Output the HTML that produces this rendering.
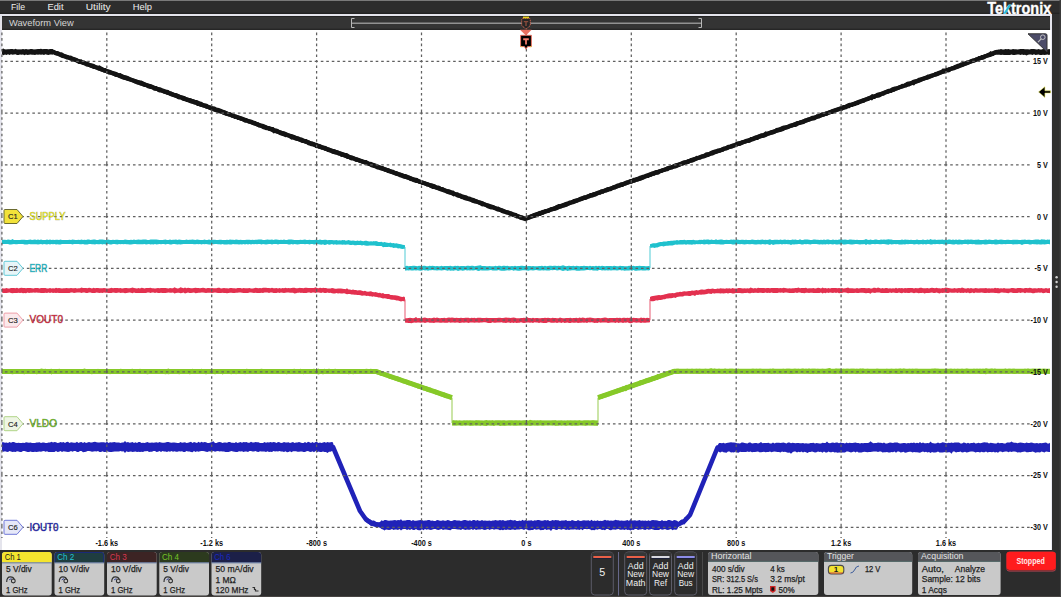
<!DOCTYPE html>
<html><head><meta charset="utf-8"><style>
html,body{margin:0;padding:0;background:#2e2e2e;width:1061px;height:597px;overflow:hidden}
svg{display:block}
</style></head><body>
<svg width="1061" height="597" viewBox="0 0 1061 597" font-family='"Liberation Sans", sans-serif'><rect x="0" y="0" width="1061" height="597" fill="#2d2d2d"/><rect x="0" y="0" width="1061" height="14" fill="#2d2d2d"/><rect x="0" y="0" width="1061" height="1" fill="#7a7a7a"/><rect x="0" y="12.6" width="1061" height="1.4" fill="#232323"/><text x="11" y="9.8" font-size="9.2" fill="#eeeeee" textLength="14" lengthAdjust="spacingAndGlyphs" >File</text><text x="47.5" y="9.8" font-size="9.2" fill="#eeeeee" textLength="16" lengthAdjust="spacingAndGlyphs" >Edit</text><text x="85.7" y="9.8" font-size="9.2" fill="#eeeeee" textLength="25" lengthAdjust="spacingAndGlyphs" >Utility</text><text x="132.7" y="9.8" font-size="9.2" fill="#eeeeee" textLength="19.3" lengthAdjust="spacingAndGlyphs" >Help</text><text x="987.2" y="13.7" font-size="16" fill="#ffffff" font-weight="bold" textLength="64" lengthAdjust="spacingAndGlyphs" stroke="#ffffff" stroke-width="0.35">Tektronix</text><polygon points="1003.3,13.8 1005.8,13.8 1011.4,4.6 1008.9,4.6" fill="#28bcd8"/><rect x="0" y="14" width="1052" height="536" fill="#e4e4ec"/><rect x="2" y="16" width="1048" height="14" fill="#343434"/><rect x="2" y="16" width="1048" height="1" fill="#242424"/><rect x="2" y="28.6" width="1048" height="1.4" fill="#262626"/><rect x="2" y="30" width="1050" height="520" fill="#ffffff"/><text x="9" y="26" font-size="9.2" fill="#d4d4d4" textLength="64.7" lengthAdjust="spacingAndGlyphs" >Waveform View</text><path d="M354.5,18.5 H351.5 V27.5 H354.5" fill="none" stroke="#b8b8b8" stroke-width="1"/><path d="M698.5,18.5 H701.5 V27.5 H698.5" fill="none" stroke="#b8b8b8" stroke-width="1"/><rect x="352" y="22.6" width="349" height="1.2" fill="#a8a8a8"/><rect x="1052" y="14" width="9" height="536" fill="#2f2f2f"/><rect x="1051" y="30" width="1" height="520" fill="#ececf4"/><rect x="1059.5" y="0" width="1.5" height="597" fill="#3a3a3a"/><circle cx="1056.6" cy="277.2" r="1.2" fill="#d0d0d0"/><circle cx="1056.6" cy="282" r="1.2" fill="#d0d0d0"/><circle cx="1056.6" cy="286.8" r="1.2" fill="#d0d0d0"/><path d="M2.0,240.0 L3.5,239.8 L5.0,239.8 L6.5,240.1 L8.0,239.6 L9.5,239.7 L11.0,239.9 L12.5,239.1 L14.0,240.1 L15.5,240.0 L17.0,239.9 L18.5,240.1 L20.0,239.9 L21.5,239.8 L23.0,239.7 L24.5,239.8 L26.0,239.9 L27.5,239.9 L29.0,239.8 L30.5,239.6 L32.0,239.9 L33.5,239.7 L35.0,239.5 L36.5,240.1 L38.0,239.5 L39.5,239.9 L41.0,239.6 L42.5,240.1 L44.0,240.0 L45.5,240.1 L47.0,239.5 L48.5,240.0 L50.0,239.5 L51.5,240.0 L53.0,239.8 L54.5,240.1 L56.0,239.8 L57.5,239.8 L59.0,240.1 L60.5,239.5 L62.0,239.9 L63.5,240.1 L65.0,240.0 L66.5,240.1 L68.0,239.9 L69.5,239.7 L71.0,239.9 L72.5,239.6 L74.0,239.8 L75.5,239.9 L77.0,240.0 L78.5,239.8 L80.0,240.1 L81.5,239.5 L83.0,239.9 L84.5,239.8 L86.0,240.0 L87.5,239.6 L89.0,239.6 L90.5,239.9 L92.0,239.8 L93.5,239.5 L95.0,239.5 L96.5,240.0 L98.0,240.0 L99.5,239.6 L101.0,239.6 L102.5,239.5 L104.0,239.8 L105.5,239.9 L107.0,239.9 L108.5,239.6 L110.0,240.0 L111.5,240.0 L113.0,239.7 L114.5,240.1 L116.0,239.7 L117.5,239.8 L119.0,240.0 L120.5,240.0 L122.0,239.9 L123.5,239.9 L125.0,239.5 L126.5,239.8 L128.0,240.1 L129.5,240.1 L131.0,239.8 L132.5,239.9 L134.0,239.6 L135.5,240.0 L137.0,239.8 L138.5,239.5 L140.0,239.8 L141.5,239.8 L143.0,239.5 L144.5,239.5 L146.0,239.5 L147.5,240.1 L149.0,240.0 L150.5,239.6 L152.0,239.6 L153.5,239.5 L155.0,239.5 L156.5,239.5 L158.0,239.8 L159.5,240.0 L161.0,240.1 L162.5,240.1 L164.0,239.8 L165.5,239.6 L167.0,240.0 L168.5,240.0 L170.0,239.5 L171.5,240.0 L173.0,239.7 L174.5,239.7 L176.0,239.5 L177.5,240.1 L179.0,239.5 L180.5,239.8 L182.0,240.1 L183.5,240.1 L185.0,240.0 L186.5,239.6 L188.0,240.0 L189.5,239.8 L191.0,239.8 L192.5,239.5 L194.0,239.8 L195.5,239.9 L197.0,239.5 L198.5,239.7 L200.0,239.9 L201.5,240.1 L203.0,240.0 L204.5,239.5 L206.0,240.0 L207.5,240.0 L209.0,239.5 L210.5,240.0 L212.0,239.9 L213.5,239.8 L215.0,239.8 L216.5,240.1 L218.0,240.1 L219.5,239.7 L221.0,239.7 L222.5,239.9 L224.0,240.0 L225.5,240.1 L227.0,239.7 L228.5,240.1 L230.0,239.6 L231.5,239.7 L233.0,239.7 L234.5,240.0 L236.0,239.6 L237.5,239.7 L239.0,240.1 L240.5,239.8 L242.0,240.1 L243.5,240.1 L245.0,240.0 L246.5,239.8 L248.0,239.7 L249.5,239.7 L251.0,240.0 L252.5,239.8 L254.0,240.0 L255.5,239.7 L257.0,239.8 L258.5,239.5 L260.0,239.5 L261.5,239.6 L263.0,240.0 L264.5,240.0 L266.0,239.8 L267.5,239.6 L269.0,239.7 L270.5,239.8 L272.0,239.5 L273.5,240.1 L275.0,239.6 L276.5,239.6 L278.0,239.7 L279.5,239.9 L281.0,239.7 L282.5,240.0 L284.0,239.6 L285.5,240.0 L287.0,240.0 L288.5,239.5 L290.0,239.5 L291.5,239.6 L293.0,239.8 L294.5,239.9 L296.0,240.1 L297.5,239.9 L299.0,240.0 L300.5,239.8 L302.0,240.0 L303.5,239.8 L305.0,239.5 L306.5,240.0 L308.0,240.1 L309.5,239.8 L311.0,239.9 L312.5,239.9 L314.0,240.0 L315.5,239.8 L317.0,240.0 L318.5,239.9 L320.0,239.6 L321.5,240.1 L323.0,239.9 L324.5,239.7 L326.0,239.7 L327.5,240.2 L329.0,239.9 L330.5,239.9 L332.0,240.0 L333.5,240.3 L335.0,240.2 L336.5,240.0 L338.0,240.5 L339.5,240.3 L341.0,240.6 L342.5,239.9 L344.0,240.3 L345.0,240.0 L345.5,240.7 L347.0,240.4 L348.5,240.1 L350.0,240.4 L351.5,240.7 L353.0,240.6 L354.5,240.7 L356.0,240.9 L357.5,240.4 L359.0,241.0 L360.5,240.5 L362.0,241.1 L363.5,241.2 L365.0,240.7 L366.5,240.7 L368.0,241.3 L369.5,241.4 L371.0,241.3 L372.5,241.6 L374.0,240.9 L375.0,241.5 L375.5,241.1 L377.0,241.3 L378.5,241.9 L380.0,242.1 L381.5,241.8 L383.0,242.4 L384.5,242.1 L386.0,242.6 L387.5,242.7 L389.0,242.9 L390.5,242.6 L392.0,243.3 L393.5,242.9 L395.0,243.6 L396.5,243.3 L398.0,243.7 L399.5,244.0 L401.0,244.3 L402.5,244.7 L404.0,245.0 L405.0,245.2 L405.0,266.3 L405.5,266.1 L407.0,265.7 L408.5,266.3 L410.0,266.0 L411.5,265.9 L413.0,265.8 L414.5,265.8 L416.0,266.1 L417.5,266.2 L419.0,265.7 L420.5,266.1 L422.0,266.2 L423.5,265.7 L425.0,265.8 L426.5,266.3 L428.0,266.2 L429.5,265.7 L431.0,266.0 L432.5,265.7 L434.0,265.9 L435.5,266.3 L437.0,265.9 L438.5,266.3 L440.0,266.2 L441.5,265.8 L443.0,266.3 L444.5,265.9 L446.0,265.9 L447.5,266.1 L449.0,266.0 L450.5,265.7 L452.0,266.2 L453.5,266.3 L455.0,265.8 L456.5,266.0 L458.0,265.7 L459.5,266.3 L461.0,266.0 L462.5,266.0 L464.0,266.0 L465.5,266.2 L467.0,265.7 L468.5,265.7 L470.0,265.9 L471.5,265.8 L473.0,265.8 L474.5,266.2 L476.0,266.1 L477.5,265.8 L479.0,265.6 L480.5,265.3 L482.0,266.0 L483.5,266.1 L485.0,265.9 L486.5,266.3 L488.0,266.2 L489.5,266.0 L491.0,266.3 L492.5,266.3 L494.0,266.3 L495.5,265.8 L497.0,266.3 L498.5,265.7 L500.0,265.7 L501.5,266.2 L503.0,265.7 L504.5,265.8 L506.0,266.1 L507.5,265.7 L509.0,266.2 L510.5,266.2 L512.0,266.1 L513.5,266.2 L515.0,265.7 L516.5,266.3 L518.0,266.1 L519.5,265.9 L521.0,265.7 L522.5,265.8 L524.0,265.9 L525.5,266.0 L527.0,266.3 L528.5,265.9 L530.0,265.9 L531.5,266.3 L533.0,266.0 L534.5,266.3 L536.0,266.3 L537.5,266.3 L539.0,265.9 L540.5,265.9 L542.0,265.7 L543.5,266.3 L545.0,265.8 L546.5,266.3 L548.0,266.1 L549.5,265.7 L551.0,265.7 L552.5,266.1 L554.0,265.8 L555.5,265.7 L557.0,265.9 L558.5,265.8 L560.0,266.1 L561.5,265.8 L563.0,265.3 L564.5,265.8 L566.0,266.3 L567.5,265.9 L569.0,265.8 L570.5,266.0 L572.0,266.0 L573.5,265.7 L575.0,266.3 L576.5,265.8 L578.0,266.1 L579.5,266.2 L581.0,265.9 L582.5,266.0 L584.0,265.7 L585.5,266.0 L587.0,265.9 L588.5,266.2 L590.0,265.7 L591.5,266.3 L593.0,265.9 L594.5,266.3 L596.0,265.8 L597.5,266.3 L599.0,265.7 L600.5,266.3 L602.0,265.8 L603.5,265.9 L605.0,266.3 L606.5,266.1 L608.0,266.0 L609.5,266.1 L611.0,266.0 L612.5,266.3 L614.0,265.8 L615.5,266.0 L617.0,266.3 L618.5,266.3 L620.0,265.7 L621.5,266.0 L623.0,266.0 L624.5,266.2 L626.0,266.2 L627.5,266.3 L629.0,265.8 L630.5,265.9 L632.0,266.1 L633.5,265.7 L635.0,266.2 L636.5,266.1 L638.0,266.0 L639.5,265.8 L641.0,266.1 L642.5,265.9 L644.0,266.0 L645.5,266.3 L647.0,266.2 L648.5,265.9 L650.0,266.3 L650.0,244.2 L651.5,243.8 L653.0,243.3 L654.5,243.3 L656.0,243.2 L657.5,242.8 L659.0,242.3 L660.5,242.1 L662.0,242.1 L663.5,241.6 L665.0,241.6 L666.5,241.4 L668.0,241.0 L669.5,241.0 L671.0,240.8 L672.5,240.7 L674.0,240.5 L675.5,240.4 L677.0,240.1 L678.5,240.4 L680.0,240.1 L681.5,239.9 L683.0,240.0 L684.5,239.8 L686.0,240.3 L687.5,240.1 L689.0,240.0 L690.5,239.9 L692.0,240.0 L693.5,239.8 L695.0,240.2 L696.5,240.2 L698.0,240.2 L699.5,239.7 L700.0,240.0 L701.0,239.8 L702.5,239.9 L704.0,239.6 L705.5,239.8 L707.0,239.5 L708.5,239.6 L710.0,239.9 L711.5,239.6 L713.0,240.0 L714.5,239.9 L716.0,239.2 L717.5,239.9 L719.0,239.7 L720.5,239.5 L722.0,239.6 L723.5,240.1 L725.0,240.1 L726.5,239.7 L728.0,240.1 L729.5,239.9 L731.0,239.6 L732.5,239.7 L734.0,239.5 L735.5,240.0 L737.0,239.6 L738.5,239.8 L740.0,240.1 L741.5,239.8 L743.0,239.8 L744.5,240.1 L746.0,239.8 L747.5,239.9 L749.0,240.1 L750.5,240.1 L752.0,239.5 L753.5,239.8 L755.0,240.1 L756.5,239.9 L758.0,239.8 L759.5,240.0 L761.0,239.8 L762.5,239.6 L764.0,240.0 L765.5,239.7 L767.0,239.9 L768.5,239.7 L770.0,239.2 L771.5,240.1 L773.0,239.9 L774.5,239.7 L776.0,239.7 L777.5,239.7 L779.0,240.0 L780.5,239.6 L782.0,240.1 L783.5,239.7 L785.0,239.6 L786.5,239.9 L788.0,239.8 L789.5,240.1 L791.0,240.0 L792.5,239.5 L794.0,239.7 L795.5,239.5 L797.0,240.1 L798.5,240.0 L800.0,239.3 L801.5,240.1 L803.0,240.1 L804.5,239.6 L806.0,239.6 L807.5,239.6 L809.0,239.7 L810.5,240.0 L812.0,240.1 L813.5,239.6 L815.0,239.6 L816.5,239.8 L818.0,239.7 L819.5,240.0 L821.0,239.7 L822.5,239.9 L824.0,239.6 L825.5,240.1 L827.0,239.6 L828.5,239.5 L830.0,239.9 L831.5,239.9 L833.0,239.5 L834.5,240.1 L836.0,239.7 L837.5,240.1 L839.0,239.5 L840.5,239.6 L842.0,239.5 L843.5,239.8 L845.0,239.6 L846.5,239.7 L848.0,240.0 L849.5,239.6 L851.0,239.6 L852.5,239.7 L854.0,239.8 L855.5,240.0 L857.0,239.7 L858.5,239.9 L860.0,240.1 L861.5,240.1 L863.0,240.0 L864.5,239.8 L866.0,238.9 L867.5,239.8 L869.0,239.9 L870.5,239.6 L872.0,240.1 L873.5,240.1 L875.0,239.5 L876.5,239.5 L878.0,239.9 L879.5,240.0 L881.0,239.5 L882.5,239.8 L884.0,239.5 L885.5,239.8 L887.0,239.5 L888.5,239.2 L890.0,239.5 L891.5,239.6 L893.0,239.9 L894.5,240.1 L896.0,240.1 L897.5,240.0 L899.0,240.1 L900.5,240.1 L902.0,239.5 L903.5,240.1 L905.0,239.5 L906.5,239.8 L908.0,239.8 L909.5,240.0 L911.0,239.8 L912.5,240.0 L914.0,240.0 L915.5,240.0 L917.0,239.5 L918.5,240.1 L920.0,240.0 L921.5,240.0 L923.0,239.5 L924.5,240.1 L926.0,240.1 L927.5,239.5 L929.0,239.9 L930.5,239.1 L932.0,239.8 L933.5,239.8 L935.0,239.6 L936.5,240.1 L938.0,239.8 L939.5,239.7 L941.0,239.7 L942.5,239.6 L944.0,240.1 L945.5,239.6 L947.0,240.1 L948.5,239.5 L950.0,239.6 L951.5,239.9 L953.0,239.5 L954.5,240.1 L956.0,239.5 L957.5,239.9 L959.0,239.5 L960.5,239.8 L962.0,240.1 L963.5,240.0 L965.0,239.6 L966.5,239.7 L968.0,239.4 L969.5,239.7 L971.0,239.6 L972.5,239.8 L974.0,240.1 L975.5,239.7 L977.0,239.7 L978.5,239.6 L980.0,239.9 L981.5,239.9 L983.0,239.9 L984.5,239.8 L986.0,239.5 L987.5,240.1 L989.0,239.5 L990.5,239.7 L992.0,240.1 L993.5,240.1 L995.0,239.6 L996.5,239.6 L998.0,240.1 L999.5,239.7 L1001.0,239.5 L1002.5,239.8 L1004.0,239.9 L1005.5,240.1 L1007.0,239.8 L1008.5,239.8 L1010.0,240.1 L1011.5,239.9 L1013.0,239.8 L1014.5,239.8 L1016.0,239.7 L1017.5,239.7 L1019.0,240.0 L1020.5,239.9 L1022.0,239.7 L1023.5,239.8 L1025.0,239.5 L1026.5,240.0 L1028.0,239.8 L1029.5,239.8 L1031.0,240.0 L1032.5,240.0 L1034.0,239.7 L1035.5,239.6 L1037.0,239.6 L1038.5,239.6 L1040.0,240.1 L1041.5,239.2 L1043.0,239.5 L1044.5,239.6 L1046.0,239.9 L1047.5,239.6 L1049.0,239.8 L1050.0,239.6 L1050.0,244.4 L1049.0,244.1 L1047.5,244.1 L1046.0,244.2 L1044.5,244.5 L1043.0,244.3 L1041.5,244.6 L1040.0,244.5 L1038.5,244.3 L1037.0,244.4 L1035.5,244.2 L1034.0,244.3 L1032.5,244.1 L1031.0,244.5 L1029.5,244.4 L1028.0,243.9 L1026.5,243.9 L1025.0,244.1 L1023.5,244.2 L1022.0,244.9 L1020.5,244.3 L1019.0,244.0 L1017.5,244.2 L1016.0,244.2 L1014.5,244.3 L1013.0,244.4 L1011.5,244.0 L1010.0,244.1 L1008.5,244.0 L1007.0,244.0 L1005.5,244.3 L1004.0,244.1 L1002.5,244.2 L1001.0,244.3 L999.5,244.0 L998.0,244.3 L996.5,244.5 L995.0,244.5 L993.5,243.9 L992.0,244.2 L990.5,244.1 L989.0,244.0 L987.5,244.2 L986.0,244.4 L984.5,244.5 L983.0,244.0 L981.5,244.5 L980.0,244.4 L978.5,244.5 L977.0,244.4 L975.5,244.5 L974.0,244.1 L972.5,244.2 L971.0,243.9 L969.5,243.9 L968.0,244.6 L966.5,244.0 L965.0,243.9 L963.5,243.9 L962.0,244.5 L960.5,244.2 L959.0,244.5 L957.5,244.4 L956.0,244.1 L954.5,244.4 L953.0,244.4 L951.5,244.3 L950.0,244.1 L948.5,244.0 L947.0,244.5 L945.5,244.5 L944.0,244.4 L942.5,244.1 L941.0,244.0 L939.5,244.3 L938.0,244.0 L936.5,243.9 L935.0,244.3 L933.5,243.9 L932.0,244.5 L930.5,244.5 L929.0,243.9 L927.5,243.9 L926.0,244.4 L924.5,244.1 L923.0,244.5 L921.5,244.0 L920.0,244.2 L918.5,244.5 L917.0,243.9 L915.5,244.2 L914.0,244.4 L912.5,244.1 L911.0,244.0 L909.5,243.9 L908.0,244.3 L906.5,244.1 L905.0,244.4 L903.5,244.2 L902.0,244.5 L900.5,244.5 L899.0,244.4 L897.5,244.0 L896.0,244.2 L894.5,244.1 L893.0,244.3 L891.5,244.5 L890.0,243.9 L888.5,244.7 L887.0,244.4 L885.5,244.3 L884.0,244.0 L882.5,244.0 L881.0,244.3 L879.5,244.2 L878.0,243.9 L876.5,243.9 L875.0,244.2 L873.5,243.9 L872.0,244.0 L870.5,244.5 L869.0,244.5 L867.5,244.0 L866.0,244.9 L864.5,243.9 L863.0,244.3 L861.5,244.3 L860.0,244.5 L858.5,244.2 L857.0,244.1 L855.5,244.0 L854.0,244.2 L852.5,244.5 L851.0,244.4 L849.5,244.2 L848.0,244.0 L846.5,244.3 L845.0,244.5 L843.5,244.4 L842.0,244.1 L840.5,244.4 L839.0,244.3 L837.5,244.4 L836.0,244.4 L834.5,244.0 L833.0,244.4 L831.5,244.3 L830.0,244.1 L828.5,244.4 L827.0,244.1 L825.5,244.5 L824.0,244.2 L822.5,244.4 L821.0,244.3 L819.5,244.4 L818.0,244.2 L816.5,243.9 L815.0,244.0 L813.5,243.9 L812.0,243.9 L810.5,244.5 L809.0,244.2 L807.5,243.9 L806.0,244.3 L804.5,244.0 L803.0,244.4 L801.5,244.5 L800.0,244.0 L798.5,243.9 L797.0,244.3 L795.5,244.2 L794.0,244.6 L792.5,244.2 L791.0,244.9 L789.5,244.2 L788.0,244.3 L786.5,244.1 L785.0,244.2 L783.5,244.1 L782.0,244.4 L780.5,243.9 L779.0,244.3 L777.5,244.3 L776.0,244.3 L774.5,244.4 L773.0,245.0 L771.5,244.1 L770.0,245.0 L768.5,244.4 L767.0,244.1 L765.5,244.4 L764.0,244.2 L762.5,244.1 L761.0,244.4 L759.5,244.2 L758.0,244.2 L756.5,244.5 L755.0,244.4 L753.5,244.2 L752.0,244.1 L750.5,244.3 L749.0,244.3 L747.5,244.1 L746.0,244.3 L744.5,244.4 L743.0,244.2 L741.5,244.0 L740.0,244.2 L738.5,244.0 L737.0,244.2 L735.5,244.3 L734.0,244.4 L732.5,244.4 L731.0,244.0 L729.5,244.0 L728.0,244.0 L726.5,244.0 L725.0,243.9 L723.5,244.4 L722.0,244.5 L720.5,244.4 L719.0,244.3 L717.5,244.2 L716.0,244.2 L714.5,244.0 L713.0,244.1 L711.5,244.1 L710.0,244.2 L708.5,244.4 L707.0,244.1 L705.5,244.2 L704.0,244.4 L702.5,244.0 L701.0,244.0 L700.0,244.4 L699.5,244.1 L698.0,244.2 L696.5,244.1 L695.0,244.6 L693.5,244.3 L692.0,244.7 L690.5,244.6 L689.0,244.6 L687.5,244.2 L686.0,244.7 L684.5,244.2 L683.0,244.5 L681.5,244.4 L680.0,244.6 L678.5,244.6 L677.0,244.8 L675.5,244.6 L674.0,245.0 L672.5,245.5 L671.0,245.6 L669.5,245.5 L668.0,245.7 L666.5,245.8 L665.0,246.0 L663.5,246.4 L662.0,246.1 L660.5,246.3 L659.0,246.8 L657.5,247.4 L656.0,247.6 L654.5,247.9 L653.0,247.5 L651.5,247.8 L650.0,247.8 L650.0,270.1 L648.5,270.6 L647.0,270.2 L645.5,270.4 L644.0,270.6 L642.5,270.6 L641.0,270.2 L639.5,270.5 L638.0,270.4 L636.5,270.7 L635.0,270.7 L633.5,270.1 L632.0,270.7 L630.5,270.3 L629.0,270.5 L627.5,270.5 L626.0,270.5 L624.5,270.7 L623.0,270.3 L621.5,270.6 L620.0,270.1 L618.5,270.2 L617.0,270.6 L615.5,270.2 L614.0,270.3 L612.5,270.3 L611.0,270.6 L609.5,270.3 L608.0,270.4 L606.5,270.3 L605.0,270.6 L603.5,270.3 L602.0,270.5 L600.5,270.1 L599.0,270.1 L597.5,270.7 L596.0,270.6 L594.5,270.5 L593.0,270.5 L591.5,270.1 L590.0,270.3 L588.5,270.1 L587.0,270.1 L585.5,270.3 L584.0,270.4 L582.5,270.6 L581.0,270.5 L579.5,270.7 L578.0,270.7 L576.5,270.7 L575.0,270.2 L573.5,270.2 L572.0,270.2 L570.5,270.4 L569.0,270.5 L567.5,271.0 L566.0,270.2 L564.5,270.4 L563.0,271.0 L561.5,270.6 L560.0,270.1 L558.5,270.2 L557.0,270.4 L555.5,270.1 L554.0,270.1 L552.5,270.2 L551.0,270.1 L549.5,270.6 L548.0,270.5 L546.5,270.5 L545.0,270.3 L543.5,270.5 L542.0,270.2 L540.5,270.4 L539.0,270.5 L537.5,270.3 L536.0,270.1 L534.5,270.2 L533.0,270.4 L531.5,270.2 L530.0,270.3 L528.5,270.7 L527.0,270.6 L525.5,270.2 L524.0,270.3 L522.5,270.2 L521.0,270.5 L519.5,270.7 L518.0,270.7 L516.5,270.4 L515.0,270.2 L513.5,270.7 L512.0,270.1 L510.5,270.2 L509.0,270.4 L507.5,270.2 L506.0,270.6 L504.5,270.7 L503.0,270.7 L501.5,270.7 L500.0,270.6 L498.5,270.1 L497.0,270.4 L495.5,270.6 L494.0,270.5 L492.5,270.4 L491.0,270.1 L489.5,270.2 L488.0,270.6 L486.5,270.5 L485.0,270.4 L483.5,270.5 L482.0,270.5 L480.5,270.2 L479.0,271.0 L477.5,270.7 L476.0,270.1 L474.5,270.3 L473.0,270.6 L471.5,270.2 L470.0,270.6 L468.5,270.3 L467.0,270.4 L465.5,270.1 L464.0,270.6 L462.5,270.7 L461.0,270.2 L459.5,270.5 L458.0,270.9 L456.5,270.2 L455.0,270.3 L453.5,270.7 L452.0,270.6 L450.5,270.7 L449.0,270.3 L447.5,270.7 L446.0,270.3 L444.5,270.1 L443.0,270.3 L441.5,270.4 L440.0,270.3 L438.5,270.3 L437.0,270.5 L435.5,270.2 L434.0,270.2 L432.5,270.1 L431.0,270.2 L429.5,270.3 L428.0,270.7 L426.5,270.3 L425.0,270.6 L423.5,270.1 L422.0,270.6 L420.5,270.7 L419.0,270.5 L417.5,270.2 L416.0,270.6 L414.5,270.3 L413.0,270.5 L411.5,270.5 L410.0,270.2 L408.5,270.4 L407.0,270.2 L405.5,270.7 L405.0,270.1 L405.0,248.8 L404.0,248.7 L402.5,249.0 L401.0,248.8 L399.5,248.3 L398.0,248.5 L396.5,247.8 L395.0,247.8 L393.5,247.9 L392.0,247.2 L390.5,247.3 L389.0,246.8 L387.5,247.1 L386.0,247.1 L384.5,246.9 L383.0,247.3 L381.5,246.0 L380.0,246.1 L378.5,246.0 L377.0,246.0 L375.5,245.7 L375.0,245.6 L374.0,245.4 L372.5,245.5 L371.0,245.4 L369.5,245.6 L368.0,245.8 L366.5,245.7 L365.0,245.6 L363.5,245.0 L362.0,245.6 L360.5,245.0 L359.0,245.1 L357.5,245.1 L356.0,245.2 L354.5,245.2 L353.0,244.8 L351.5,245.1 L350.0,245.0 L348.5,244.6 L347.0,244.6 L345.5,244.7 L345.0,244.8 L344.0,244.5 L342.5,244.8 L341.0,244.5 L339.5,244.4 L338.0,244.6 L336.5,244.7 L335.0,244.2 L333.5,244.8 L332.0,244.1 L330.5,244.6 L329.0,244.7 L327.5,244.1 L326.0,244.7 L324.5,245.1 L323.0,244.3 L321.5,244.8 L320.0,244.5 L318.5,244.2 L317.0,244.0 L315.5,244.3 L314.0,244.5 L312.5,244.1 L311.0,244.1 L309.5,244.5 L308.0,244.0 L306.5,243.9 L305.0,244.2 L303.5,244.0 L302.0,244.0 L300.5,244.1 L299.0,244.3 L297.5,244.4 L296.0,244.2 L294.5,243.9 L293.0,244.4 L291.5,243.9 L290.0,244.5 L288.5,244.4 L287.0,244.1 L285.5,244.0 L284.0,244.0 L282.5,243.9 L281.0,244.1 L279.5,244.1 L278.0,244.5 L276.5,243.9 L275.0,243.9 L273.5,244.1 L272.0,244.4 L270.5,243.9 L269.0,244.0 L267.5,244.2 L266.0,244.5 L264.5,244.3 L263.0,244.0 L261.5,244.5 L260.0,243.9 L258.5,244.0 L257.0,244.2 L255.5,244.1 L254.0,244.3 L252.5,243.9 L251.0,244.4 L249.5,243.9 L248.0,244.4 L246.5,244.1 L245.0,244.4 L243.5,244.0 L242.0,244.4 L240.5,244.2 L239.0,244.4 L237.5,244.3 L236.0,244.2 L234.5,244.3 L233.0,244.0 L231.5,244.5 L230.0,244.4 L228.5,244.2 L227.0,244.4 L225.5,244.4 L224.0,244.4 L222.5,244.1 L221.0,244.4 L219.5,244.2 L218.0,244.2 L216.5,244.1 L215.0,243.9 L213.5,244.2 L212.0,243.9 L210.5,244.5 L209.0,244.5 L207.5,244.2 L206.0,244.1 L204.5,244.3 L203.0,243.9 L201.5,244.4 L200.0,243.9 L198.5,244.3 L197.0,244.1 L195.5,244.2 L194.0,244.2 L192.5,243.9 L191.0,244.0 L189.5,243.9 L188.0,244.1 L186.5,244.1 L185.0,244.1 L183.5,244.0 L182.0,244.2 L180.5,244.5 L179.0,244.2 L177.5,244.4 L176.0,244.3 L174.5,244.1 L173.0,243.9 L171.5,244.5 L170.0,244.4 L168.5,243.9 L167.0,243.9 L165.5,244.5 L164.0,243.9 L162.5,244.1 L161.0,244.2 L159.5,244.1 L158.0,244.2 L156.5,244.4 L155.0,244.1 L153.5,244.5 L152.0,244.3 L150.5,244.5 L149.0,243.9 L147.5,244.2 L146.0,244.4 L144.5,244.0 L143.0,244.3 L141.5,244.2 L140.0,244.2 L138.5,244.2 L137.0,244.2 L135.5,244.0 L134.0,243.9 L132.5,244.2 L131.0,244.4 L129.5,244.4 L128.0,244.2 L126.5,244.2 L125.0,244.1 L123.5,244.2 L122.0,243.9 L120.5,244.3 L119.0,244.0 L117.5,244.5 L116.0,244.2 L114.5,243.9 L113.0,244.1 L111.5,244.4 L110.0,244.5 L108.5,244.0 L107.0,244.1 L105.5,244.4 L104.0,244.0 L102.5,244.4 L101.0,243.9 L99.5,244.2 L98.0,244.3 L96.5,244.0 L95.0,244.5 L93.5,244.2 L92.0,244.2 L90.5,243.9 L89.0,244.0 L87.5,244.4 L86.0,244.4 L84.5,244.4 L83.0,244.0 L81.5,244.3 L80.0,244.2 L78.5,244.0 L77.0,243.9 L75.5,244.0 L74.0,243.9 L72.5,244.5 L71.0,244.1 L69.5,244.0 L68.0,243.9 L66.5,244.0 L65.0,244.1 L63.5,243.9 L62.0,243.9 L60.5,244.4 L59.0,244.5 L57.5,244.3 L56.0,244.5 L54.5,244.1 L53.0,244.3 L51.5,244.0 L50.0,244.5 L48.5,244.1 L47.0,244.4 L45.5,244.2 L44.0,244.1 L42.5,244.4 L41.0,244.1 L39.5,244.3 L38.0,244.4 L36.5,244.3 L35.0,244.2 L33.5,244.2 L32.0,244.3 L30.5,244.3 L29.0,243.9 L27.5,244.4 L26.0,244.5 L24.5,244.5 L23.0,244.0 L21.5,244.1 L20.0,244.1 L18.5,244.0 L17.0,244.2 L15.5,244.3 L14.0,244.1 L12.5,244.2 L11.0,244.5 L9.5,244.5 L8.0,243.9 L6.5,243.9 L5.0,243.9 L3.5,244.1 L2.0,244.3Z" fill="#1fc1cd"/><rect x="404.5" y="247" width="1" height="21.19999999999999" fill="#50ccd6"/><rect x="649.5" y="246" width="1" height="22.19999999999999" fill="#50ccd6"/><path d="M2.0,288.2 L3.5,288.4 L5.0,288.4 L6.5,287.9 L8.0,288.4 L9.5,288.5 L11.0,288.1 L12.5,288.1 L14.0,288.1 L15.5,288.2 L17.0,287.8 L18.5,288.4 L20.0,288.1 L21.5,287.8 L23.0,288.1 L24.5,288.1 L26.0,288.3 L27.5,288.1 L29.0,288.0 L30.5,287.9 L32.0,288.3 L33.5,288.4 L35.0,288.1 L36.5,288.0 L38.0,287.9 L39.5,288.5 L41.0,288.1 L42.5,288.1 L44.0,288.0 L45.5,288.1 L47.0,288.4 L48.5,288.4 L50.0,287.9 L51.5,288.4 L53.0,288.3 L54.5,288.4 L56.0,287.8 L57.5,288.2 L59.0,287.9 L60.5,288.2 L62.0,288.4 L63.5,288.3 L65.0,288.3 L66.5,288.1 L68.0,288.2 L69.5,288.3 L71.0,287.9 L72.5,288.2 L74.0,288.3 L75.5,288.1 L77.0,288.4 L78.5,288.2 L80.0,288.3 L81.5,287.6 L83.0,288.0 L84.5,287.9 L86.0,287.9 L87.5,288.2 L89.0,287.8 L90.5,288.1 L92.0,288.4 L93.5,287.8 L95.0,288.3 L96.5,287.9 L98.0,288.1 L99.5,288.2 L101.0,288.2 L102.5,288.3 L104.0,288.0 L105.5,288.2 L107.0,288.4 L108.5,288.4 L110.0,288.2 L111.5,287.8 L113.0,288.3 L114.5,288.0 L116.0,288.0 L117.5,287.9 L119.0,288.3 L120.5,287.9 L122.0,288.4 L123.5,288.2 L125.0,288.1 L126.5,287.9 L128.0,288.3 L129.5,288.2 L131.0,287.9 L132.5,287.4 L134.0,288.1 L135.5,288.3 L137.0,288.4 L138.5,287.9 L140.0,288.4 L141.5,287.8 L143.0,287.9 L144.5,288.4 L146.0,288.1 L147.5,287.9 L149.0,287.9 L150.5,287.8 L152.0,288.3 L153.5,288.2 L155.0,288.4 L156.5,288.3 L158.0,288.1 L159.5,288.2 L161.0,288.1 L162.5,288.1 L164.0,288.0 L165.5,287.9 L167.0,288.2 L168.5,288.4 L170.0,288.0 L171.5,288.2 L173.0,288.3 L174.5,287.2 L176.0,287.9 L177.5,288.4 L179.0,288.3 L180.5,287.3 L182.0,287.8 L183.5,288.3 L185.0,287.5 L186.5,288.3 L188.0,287.8 L189.5,287.9 L191.0,288.3 L192.5,288.2 L194.0,287.9 L195.5,287.7 L197.0,287.9 L198.5,288.1 L200.0,288.2 L201.5,288.0 L203.0,287.8 L204.5,287.9 L206.0,288.4 L207.5,287.9 L209.0,288.0 L210.5,288.2 L212.0,287.9 L213.5,288.2 L215.0,288.2 L216.5,288.2 L218.0,287.8 L219.5,287.8 L221.0,288.4 L222.5,288.2 L224.0,288.1 L225.5,288.2 L227.0,288.2 L228.5,288.4 L230.0,288.0 L231.5,288.0 L233.0,288.3 L234.5,288.3 L236.0,288.4 L237.5,288.1 L239.0,288.0 L240.5,288.0 L242.0,288.4 L243.5,288.0 L245.0,288.3 L246.5,288.3 L248.0,288.3 L249.5,287.9 L251.0,288.4 L252.5,288.4 L254.0,288.2 L255.5,287.8 L257.0,288.0 L258.5,288.3 L260.0,287.9 L261.5,288.3 L263.0,287.7 L264.5,287.7 L266.0,287.8 L267.5,287.9 L269.0,288.1 L270.5,288.3 L272.0,287.8 L273.5,288.2 L275.0,288.3 L276.5,287.9 L278.0,288.4 L279.5,288.1 L281.0,288.4 L282.5,287.9 L284.0,288.3 L285.5,287.8 L287.0,288.2 L288.5,288.0 L290.0,288.2 L291.5,288.1 L293.0,287.7 L294.5,287.8 L296.0,288.2 L297.5,288.2 L299.0,288.0 L300.0,287.7 L300.5,287.9 L302.0,287.9 L303.5,288.2 L305.0,287.7 L306.5,287.8 L308.0,287.9 L309.5,288.1 L311.0,288.1 L312.5,288.1 L314.0,288.1 L315.5,287.2 L317.0,287.9 L318.5,288.3 L320.0,287.8 L321.5,288.1 L322.0,288.2 L323.0,287.7 L324.5,288.1 L326.0,288.1 L327.5,288.4 L329.0,288.4 L330.5,288.4 L332.0,288.1 L333.5,288.3 L335.0,288.8 L336.5,288.7 L338.0,288.6 L339.5,288.4 L341.0,288.6 L342.5,288.7 L344.0,289.0 L345.0,289.1 L345.5,289.2 L347.0,288.3 L348.5,289.6 L350.0,289.6 L351.5,289.9 L353.0,289.6 L354.5,289.9 L356.0,290.0 L357.5,290.4 L359.0,290.2 L360.5,290.2 L362.0,290.7 L363.5,291.2 L365.0,290.8 L366.5,291.4 L368.0,291.7 L369.5,291.5 L371.0,291.3 L372.5,292.0 L374.0,292.2 L375.0,292.2 L375.5,292.0 L377.0,292.4 L378.5,292.9 L380.0,292.8 L381.5,293.5 L383.0,293.1 L384.5,293.9 L386.0,294.0 L387.5,294.0 L389.0,294.1 L390.5,294.9 L392.0,295.1 L393.5,295.3 L395.0,295.2 L396.5,295.6 L398.0,295.7 L399.5,296.3 L401.0,296.7 L402.5,296.9 L404.0,296.6 L405.0,297.5 L405.0,318.3 L405.5,318.2 L407.0,318.2 L408.5,318.1 L410.0,317.7 L411.5,318.0 L413.0,318.3 L414.5,318.0 L416.0,317.1 L417.5,318.2 L419.0,318.0 L420.5,318.2 L422.0,318.2 L423.5,317.7 L425.0,317.6 L426.5,318.1 L428.0,318.3 L429.5,318.0 L431.0,318.3 L432.5,317.9 L434.0,317.6 L435.5,318.0 L437.0,317.6 L438.5,318.0 L440.0,318.3 L441.5,318.1 L443.0,318.1 L444.5,317.7 L446.0,318.3 L447.5,317.8 L449.0,317.6 L450.5,317.7 L452.0,317.6 L453.5,317.8 L455.0,318.0 L456.5,317.8 L458.0,317.9 L459.5,318.1 L461.0,317.8 L462.5,318.1 L464.0,317.9 L465.5,317.7 L467.0,317.7 L468.5,317.7 L470.0,318.3 L471.5,317.7 L473.0,318.1 L474.5,317.7 L476.0,318.2 L477.5,317.8 L479.0,317.7 L480.5,317.8 L482.0,318.1 L483.5,318.0 L485.0,317.9 L486.5,317.8 L488.0,318.1 L489.5,317.9 L491.0,318.0 L492.5,318.0 L494.0,318.0 L495.5,318.0 L497.0,318.1 L498.5,317.7 L500.0,317.8 L501.5,318.1 L503.0,318.0 L504.5,317.7 L506.0,317.6 L507.5,317.7 L509.0,317.7 L510.5,317.9 L512.0,317.8 L513.5,317.4 L515.0,317.8 L516.5,318.2 L518.0,318.2 L519.5,318.3 L521.0,318.0 L522.5,318.0 L524.0,317.7 L525.5,318.1 L527.0,317.1 L528.5,318.1 L530.0,317.9 L531.5,318.3 L533.0,317.7 L534.5,318.2 L536.0,318.0 L537.5,317.9 L539.0,318.2 L540.5,318.3 L542.0,318.0 L543.5,318.1 L545.0,317.8 L546.5,318.0 L548.0,317.7 L549.5,317.9 L551.0,318.2 L552.5,317.7 L554.0,318.0 L555.5,318.1 L557.0,318.2 L558.5,318.2 L560.0,317.6 L561.5,318.1 L563.0,318.2 L564.5,318.3 L566.0,318.1 L567.5,317.9 L569.0,318.1 L570.5,317.7 L572.0,318.3 L573.5,318.1 L575.0,318.0 L576.5,317.8 L578.0,318.2 L579.5,317.6 L581.0,318.1 L582.5,317.6 L584.0,317.7 L585.5,318.2 L587.0,317.7 L588.5,317.7 L590.0,317.6 L591.5,317.8 L593.0,318.0 L594.5,318.2 L596.0,318.3 L597.5,317.9 L599.0,318.0 L600.5,318.2 L602.0,317.9 L603.5,317.8 L605.0,317.6 L606.5,317.7 L608.0,318.2 L609.5,318.0 L611.0,318.0 L612.5,317.9 L614.0,318.0 L615.5,318.1 L617.0,317.7 L618.5,318.0 L620.0,317.8 L621.5,318.2 L623.0,317.8 L624.5,317.7 L626.0,318.1 L627.5,317.8 L629.0,317.9 L630.5,317.5 L632.0,318.1 L633.5,317.7 L635.0,318.0 L636.5,318.1 L638.0,318.2 L639.5,318.2 L641.0,317.6 L642.5,318.0 L644.0,317.7 L645.5,318.2 L647.0,317.7 L648.5,318.1 L650.0,318.3 L650.0,297.0 L651.5,296.3 L653.0,295.9 L654.5,295.8 L656.0,295.6 L657.5,295.3 L659.0,294.9 L660.5,295.2 L662.0,294.9 L663.5,294.7 L665.0,294.3 L666.5,293.9 L668.0,293.6 L669.5,293.3 L671.0,293.2 L672.5,293.0 L674.0,293.2 L675.5,292.8 L677.0,292.3 L678.5,292.3 L680.0,291.8 L681.5,291.9 L683.0,291.5 L684.5,291.3 L686.0,291.5 L687.5,291.2 L689.0,290.9 L690.5,290.9 L692.0,290.4 L693.5,290.8 L695.0,290.6 L696.5,290.1 L698.0,290.4 L699.5,290.0 L701.0,289.6 L702.5,289.6 L704.0,289.7 L705.5,289.5 L707.0,289.0 L708.5,288.8 L710.0,288.9 L711.5,288.7 L713.0,288.6 L714.0,288.9 L714.5,288.9 L716.0,288.9 L717.5,288.5 L719.0,288.7 L720.5,288.2 L722.0,288.4 L723.5,288.4 L725.0,288.8 L726.5,288.3 L728.0,288.5 L729.5,288.3 L731.0,288.8 L732.5,288.1 L734.0,288.6 L735.5,288.5 L737.0,288.6 L738.5,288.1 L740.0,288.1 L741.5,288.3 L743.0,288.6 L744.5,288.3 L746.0,288.5 L747.5,288.3 L749.0,288.4 L750.5,287.6 L752.0,287.9 L753.5,288.5 L755.0,288.1 L756.5,288.5 L758.0,287.8 L759.5,288.0 L760.0,288.0 L761.0,287.9 L762.5,287.9 L764.0,288.0 L765.5,288.3 L767.0,288.1 L768.5,288.1 L770.0,288.3 L771.5,287.9 L773.0,288.0 L774.5,287.9 L776.0,288.0 L777.5,288.0 L779.0,288.3 L780.5,287.9 L782.0,288.3 L783.5,287.8 L785.0,288.0 L786.5,288.3 L788.0,288.4 L789.5,288.2 L791.0,288.5 L792.5,288.3 L794.0,288.3 L795.5,287.9 L797.0,287.9 L798.5,287.5 L800.0,288.2 L801.5,288.0 L803.0,288.1 L804.5,287.9 L806.0,287.8 L807.5,288.5 L809.0,288.2 L810.5,288.2 L812.0,288.2 L813.5,288.0 L815.0,288.4 L816.5,288.3 L818.0,287.8 L819.5,287.9 L821.0,288.5 L822.5,287.4 L824.0,288.3 L825.5,288.1 L827.0,288.5 L828.5,287.9 L830.0,288.4 L831.5,288.0 L833.0,287.9 L834.5,287.9 L836.0,288.1 L837.5,288.3 L839.0,288.0 L840.5,288.2 L842.0,287.9 L843.5,288.5 L845.0,288.2 L846.5,287.9 L848.0,287.4 L849.5,288.3 L851.0,288.2 L852.5,288.3 L854.0,288.4 L855.5,288.4 L857.0,288.1 L858.5,288.5 L860.0,288.2 L861.5,288.0 L863.0,288.0 L864.5,287.9 L866.0,288.3 L867.5,288.2 L869.0,288.1 L870.5,288.4 L872.0,288.5 L873.5,287.8 L875.0,287.8 L876.5,288.3 L878.0,287.5 L879.5,288.0 L881.0,288.4 L882.5,287.9 L884.0,288.5 L885.5,287.9 L887.0,288.1 L888.5,288.5 L890.0,288.2 L891.5,288.5 L893.0,288.2 L894.5,288.4 L896.0,287.8 L897.5,288.4 L899.0,287.9 L900.5,288.3 L902.0,288.1 L903.5,288.5 L905.0,288.0 L906.5,288.2 L908.0,288.0 L909.5,287.9 L911.0,288.0 L912.5,287.9 L914.0,288.4 L915.5,288.0 L917.0,288.3 L918.5,288.2 L920.0,287.8 L921.5,287.8 L923.0,288.3 L924.5,288.2 L926.0,288.3 L927.5,287.9 L929.0,288.4 L930.5,288.1 L932.0,287.8 L933.5,288.0 L935.0,288.2 L936.5,287.8 L938.0,288.3 L939.5,288.2 L941.0,288.4 L942.5,288.0 L944.0,288.3 L945.5,287.6 L947.0,287.8 L948.5,288.0 L950.0,288.3 L951.5,288.5 L953.0,288.4 L954.5,288.0 L956.0,288.4 L957.5,288.2 L959.0,288.0 L960.5,288.3 L962.0,287.5 L963.5,287.9 L965.0,288.5 L966.5,288.4 L968.0,288.0 L969.5,288.4 L971.0,288.0 L972.5,288.5 L974.0,288.4 L975.5,288.0 L977.0,288.3 L978.5,288.4 L980.0,288.3 L981.5,288.3 L983.0,288.2 L984.5,288.2 L986.0,288.0 L987.5,288.5 L989.0,288.2 L990.5,288.4 L992.0,288.3 L993.5,288.5 L995.0,287.8 L996.5,288.3 L998.0,287.9 L999.5,288.4 L1001.0,288.3 L1002.5,288.4 L1004.0,287.9 L1005.5,288.4 L1007.0,288.4 L1008.5,288.4 L1010.0,288.4 L1011.5,288.1 L1013.0,288.0 L1014.5,288.2 L1016.0,288.4 L1017.5,288.0 L1019.0,287.9 L1020.5,288.1 L1022.0,288.3 L1023.5,288.4 L1025.0,288.1 L1026.5,288.0 L1028.0,288.3 L1029.5,287.8 L1031.0,288.1 L1032.5,288.4 L1034.0,288.3 L1035.5,288.2 L1037.0,288.5 L1038.5,287.9 L1040.0,288.3 L1041.5,288.0 L1043.0,288.4 L1044.5,288.4 L1046.0,287.9 L1047.5,288.4 L1049.0,288.2 L1050.0,287.9 L1050.0,293.2 L1049.0,293.1 L1047.5,292.9 L1046.0,292.5 L1044.5,292.9 L1043.0,293.2 L1041.5,292.6 L1040.0,292.8 L1038.5,292.5 L1037.0,292.8 L1035.5,292.7 L1034.0,293.2 L1032.5,293.2 L1031.0,292.7 L1029.5,292.8 L1028.0,292.8 L1026.5,292.5 L1025.0,293.2 L1023.5,292.6 L1022.0,292.5 L1020.5,293.1 L1019.0,292.6 L1017.5,293.1 L1016.0,293.1 L1014.5,292.9 L1013.0,292.9 L1011.5,292.5 L1010.0,292.5 L1008.5,293.2 L1007.0,293.0 L1005.5,292.8 L1004.0,292.8 L1002.5,292.6 L1001.0,292.6 L999.5,293.2 L998.0,293.2 L996.5,293.0 L995.0,292.9 L993.5,292.8 L992.0,292.8 L990.5,292.8 L989.0,293.0 L987.5,292.8 L986.0,293.1 L984.5,293.1 L983.0,292.8 L981.5,292.6 L980.0,292.8 L978.5,292.7 L977.0,292.8 L975.5,292.6 L974.0,293.2 L972.5,292.5 L971.0,292.9 L969.5,293.2 L968.0,292.6 L966.5,293.0 L965.0,292.6 L963.5,293.0 L962.0,292.8 L960.5,293.1 L959.0,292.6 L957.5,293.0 L956.0,292.6 L954.5,292.7 L953.0,292.8 L951.5,292.8 L950.0,292.5 L948.5,292.9 L947.0,293.0 L945.5,292.8 L944.0,292.7 L942.5,293.0 L941.0,292.8 L939.5,293.4 L938.0,293.1 L936.5,292.6 L935.0,293.1 L933.5,292.9 L932.0,292.6 L930.5,292.8 L929.0,293.1 L927.5,293.1 L926.0,293.0 L924.5,293.6 L923.0,292.8 L921.5,293.0 L920.0,293.0 L918.5,293.2 L917.0,292.7 L915.5,292.7 L914.0,293.2 L912.5,292.8 L911.0,292.5 L909.5,293.1 L908.0,293.1 L906.5,292.8 L905.0,292.9 L903.5,292.6 L902.0,293.2 L900.5,293.0 L899.0,292.6 L897.5,293.0 L896.0,292.9 L894.5,292.8 L893.0,292.6 L891.5,293.1 L890.0,292.5 L888.5,292.9 L887.0,293.1 L885.5,292.9 L884.0,293.1 L882.5,293.1 L881.0,292.9 L879.5,292.6 L878.0,292.6 L876.5,292.6 L875.0,292.9 L873.5,292.7 L872.0,292.5 L870.5,293.7 L869.0,293.0 L867.5,293.1 L866.0,293.2 L864.5,292.9 L863.0,292.8 L861.5,292.7 L860.0,292.8 L858.5,293.0 L857.0,293.0 L855.5,292.8 L854.0,292.9 L852.5,293.1 L851.0,292.9 L849.5,292.9 L848.0,293.2 L846.5,292.8 L845.0,292.5 L843.5,292.6 L842.0,293.1 L840.5,293.0 L839.0,293.2 L837.5,292.5 L836.0,292.9 L834.5,292.6 L833.0,293.1 L831.5,292.8 L830.0,292.6 L828.5,293.1 L827.0,292.6 L825.5,293.2 L824.0,292.7 L822.5,293.4 L821.0,292.6 L819.5,293.0 L818.0,293.0 L816.5,292.9 L815.0,293.0 L813.5,292.9 L812.0,292.7 L810.5,292.7 L809.0,293.0 L807.5,292.8 L806.0,292.7 L804.5,293.2 L803.0,292.9 L801.5,292.9 L800.0,292.5 L798.5,292.5 L797.0,292.9 L795.5,292.6 L794.0,292.9 L792.5,292.9 L791.0,293.1 L789.5,292.9 L788.0,292.7 L786.5,292.5 L785.0,292.6 L783.5,293.1 L782.0,292.6 L780.5,292.7 L779.0,292.5 L777.5,293.0 L776.0,293.1 L774.5,293.0 L773.0,292.9 L771.5,292.6 L770.0,293.1 L768.5,292.8 L767.0,293.1 L765.5,292.5 L764.0,293.1 L762.5,292.9 L761.0,292.7 L760.0,292.7 L759.5,292.8 L758.0,293.0 L756.5,292.8 L755.0,292.8 L753.5,293.0 L752.0,292.8 L750.5,293.3 L749.0,293.2 L747.5,292.8 L746.0,292.9 L744.5,293.1 L743.0,293.2 L741.5,293.2 L740.0,293.0 L738.5,292.9 L737.0,293.0 L735.5,293.1 L734.0,293.4 L732.5,293.5 L731.0,293.0 L729.5,293.0 L728.0,293.5 L726.5,293.1 L725.0,293.3 L723.5,293.4 L722.0,293.2 L720.5,293.4 L719.0,293.3 L717.5,293.2 L716.0,293.3 L714.5,293.4 L714.0,293.7 L713.0,293.1 L711.5,293.9 L710.0,293.8 L708.5,293.6 L707.0,294.0 L705.5,294.2 L704.0,294.4 L702.5,294.4 L701.0,294.7 L699.5,294.6 L698.0,294.9 L696.5,294.8 L695.0,296.0 L693.5,295.3 L692.0,295.2 L690.5,295.9 L689.0,296.0 L687.5,295.7 L686.0,295.8 L684.5,295.8 L683.0,296.5 L681.5,296.5 L680.0,296.4 L678.5,296.7 L677.0,297.0 L675.5,297.9 L674.0,297.5 L672.5,298.0 L671.0,298.2 L669.5,298.2 L668.0,298.6 L666.5,298.6 L665.0,299.2 L663.5,299.2 L662.0,299.7 L660.5,300.0 L659.0,299.9 L657.5,300.4 L656.0,300.3 L654.5,300.9 L653.0,301.2 L651.5,301.3 L650.0,301.0 L650.0,322.3 L648.5,322.4 L647.0,322.4 L645.5,322.7 L644.0,322.8 L642.5,322.6 L641.0,323.0 L639.5,322.5 L638.0,322.5 L636.5,322.8 L635.0,322.6 L633.5,322.3 L632.0,322.9 L630.5,323.2 L629.0,323.0 L627.5,322.3 L626.0,322.7 L624.5,322.4 L623.0,323.0 L621.5,322.5 L620.0,322.5 L618.5,322.9 L617.0,322.3 L615.5,322.9 L614.0,322.4 L612.5,322.6 L611.0,322.4 L609.5,322.7 L608.0,322.9 L606.5,322.6 L605.0,322.5 L603.5,322.4 L602.0,322.5 L600.5,322.8 L599.0,322.3 L597.5,322.9 L596.0,322.7 L594.5,322.9 L593.0,322.5 L591.5,322.3 L590.0,322.5 L588.5,322.3 L587.0,322.9 L585.5,322.4 L584.0,322.7 L582.5,322.4 L581.0,322.8 L579.5,322.7 L578.0,322.9 L576.5,322.4 L575.0,322.8 L573.5,322.7 L572.0,322.6 L570.5,323.0 L569.0,322.9 L567.5,322.4 L566.0,322.7 L564.5,322.9 L563.0,322.3 L561.5,322.9 L560.0,322.6 L558.5,322.4 L557.0,322.9 L555.5,322.4 L554.0,322.8 L552.5,322.7 L551.0,322.7 L549.5,322.3 L548.0,322.3 L546.5,323.0 L545.0,322.9 L543.5,322.9 L542.0,322.7 L540.5,322.5 L539.0,322.9 L537.5,322.6 L536.0,322.6 L534.5,322.3 L533.0,322.9 L531.5,322.5 L530.0,322.7 L528.5,322.5 L527.0,322.6 L525.5,322.7 L524.0,322.9 L522.5,322.7 L521.0,322.3 L519.5,322.8 L518.0,322.8 L516.5,322.9 L515.0,322.4 L513.5,323.0 L512.0,322.6 L510.5,322.9 L509.0,322.6 L507.5,322.6 L506.0,322.9 L504.5,322.8 L503.0,322.7 L501.5,322.3 L500.0,322.6 L498.5,322.4 L497.0,322.6 L495.5,322.8 L494.0,322.8 L492.5,322.3 L491.0,322.9 L489.5,322.9 L488.0,322.9 L486.5,322.5 L485.0,322.3 L483.5,322.3 L482.0,322.6 L480.5,322.6 L479.0,322.8 L477.5,322.6 L476.0,322.6 L474.5,322.7 L473.0,322.4 L471.5,322.4 L470.0,322.6 L468.5,322.9 L467.0,322.6 L465.5,322.5 L464.0,322.7 L462.5,322.4 L461.0,322.7 L459.5,322.9 L458.0,322.5 L456.5,322.5 L455.0,322.7 L453.5,322.6 L452.0,322.5 L450.5,322.7 L449.0,322.3 L447.5,322.7 L446.0,322.8 L444.5,322.8 L443.0,322.4 L441.5,322.7 L440.0,322.7 L438.5,322.4 L437.0,322.6 L435.5,322.5 L434.0,322.9 L432.5,322.7 L431.0,322.8 L429.5,322.7 L428.0,322.3 L426.5,322.4 L425.0,322.9 L423.5,322.5 L422.0,322.5 L420.5,322.8 L419.0,322.4 L417.5,322.6 L416.0,322.7 L414.5,322.4 L413.0,322.7 L411.5,323.3 L410.0,323.0 L408.5,322.9 L407.0,322.8 L405.5,322.8 L405.0,322.3 L405.0,301.5 L404.0,301.3 L402.5,301.1 L401.0,301.4 L399.5,301.1 L398.0,300.5 L396.5,300.4 L395.0,299.9 L393.5,299.8 L392.0,299.8 L390.5,299.6 L389.0,298.9 L387.5,299.0 L386.0,298.4 L384.5,298.2 L383.0,298.4 L381.5,297.9 L380.0,297.5 L378.5,297.5 L377.0,297.0 L375.5,296.7 L375.0,297.1 L374.0,296.3 L372.5,296.7 L371.0,296.2 L369.5,296.2 L368.0,295.8 L366.5,296.1 L365.0,295.6 L363.5,295.5 L362.0,295.7 L360.5,295.2 L359.0,295.0 L357.5,295.1 L356.0,294.7 L354.5,294.7 L353.0,294.4 L351.5,294.5 L350.0,293.9 L348.5,294.1 L347.0,294.2 L345.5,293.7 L345.0,293.6 L344.0,293.3 L342.5,293.4 L341.0,293.6 L339.5,293.2 L338.0,293.6 L336.5,293.0 L335.0,293.4 L333.5,293.5 L332.0,293.2 L330.5,292.8 L329.0,293.1 L327.5,292.6 L326.0,293.1 L324.5,293.0 L323.0,292.6 L322.0,292.4 L321.5,292.9 L320.0,292.7 L318.5,292.5 L317.0,292.5 L315.5,292.9 L314.0,292.4 L312.5,292.5 L311.0,293.0 L309.5,292.4 L308.0,292.6 L306.5,292.9 L305.0,292.9 L303.5,292.9 L302.0,292.8 L300.5,293.0 L300.0,292.4 L299.0,292.8 L297.5,292.8 L296.0,293.2 L294.5,293.6 L293.0,292.8 L291.5,292.7 L290.0,292.7 L288.5,292.4 L287.0,292.6 L285.5,292.8 L284.0,293.0 L282.5,292.7 L281.0,292.5 L279.5,293.0 L278.0,292.6 L276.5,293.0 L275.0,293.0 L273.5,292.9 L272.0,292.5 L270.5,292.4 L269.0,293.0 L267.5,292.6 L266.0,292.5 L264.5,292.5 L263.0,292.9 L261.5,292.7 L260.0,292.9 L258.5,292.9 L257.0,293.1 L255.5,292.8 L254.0,292.9 L252.5,292.8 L251.0,292.6 L249.5,292.5 L248.0,293.1 L246.5,293.0 L245.0,293.1 L243.5,292.9 L242.0,292.7 L240.5,292.5 L239.0,292.5 L237.5,292.8 L236.0,292.8 L234.5,293.0 L233.0,293.0 L231.5,292.7 L230.0,292.7 L228.5,292.9 L227.0,293.3 L225.5,293.0 L224.0,292.9 L222.5,292.8 L221.0,292.9 L219.5,292.9 L218.0,293.0 L216.5,292.8 L215.0,292.6 L213.5,292.7 L212.0,293.1 L210.5,292.7 L209.0,292.8 L207.5,292.7 L206.0,293.0 L204.5,292.7 L203.0,292.5 L201.5,292.5 L200.0,292.8 L198.5,292.8 L197.0,293.1 L195.5,293.2 L194.0,292.6 L192.5,292.8 L191.0,293.0 L189.5,293.0 L188.0,292.6 L186.5,292.9 L185.0,293.5 L183.5,292.5 L182.0,292.9 L180.5,293.3 L179.0,292.8 L177.5,292.8 L176.0,293.1 L174.5,293.4 L173.0,292.5 L171.5,292.8 L170.0,292.8 L168.5,292.6 L167.0,292.7 L165.5,293.0 L164.0,292.9 L162.5,293.0 L161.0,292.7 L159.5,293.1 L158.0,293.1 L156.5,292.6 L155.0,292.9 L153.5,292.6 L152.0,292.5 L150.5,292.9 L149.0,292.6 L147.5,292.5 L146.0,293.1 L144.5,292.9 L143.0,292.9 L141.5,292.9 L140.0,293.1 L138.5,293.0 L137.0,292.9 L135.5,293.1 L134.0,292.6 L132.5,293.2 L131.0,292.7 L129.5,292.5 L128.0,292.8 L126.5,292.9 L125.0,293.3 L123.5,292.7 L122.0,292.7 L120.5,293.0 L119.0,292.5 L117.5,292.7 L116.0,293.0 L114.5,292.7 L113.0,292.5 L111.5,293.1 L110.0,293.1 L108.5,293.0 L107.0,292.7 L105.5,292.8 L104.0,292.5 L102.5,293.1 L101.0,292.7 L99.5,292.9 L98.0,292.7 L96.5,292.6 L95.0,292.9 L93.5,292.9 L92.0,293.0 L90.5,292.6 L89.0,292.6 L87.5,293.0 L86.0,293.0 L84.5,292.6 L83.0,292.5 L81.5,292.9 L80.0,292.6 L78.5,292.6 L77.0,292.6 L75.5,292.7 L74.0,292.9 L72.5,292.6 L71.0,292.6 L69.5,293.1 L68.0,293.0 L66.5,293.1 L65.0,292.9 L63.5,293.1 L62.0,293.1 L60.5,292.9 L59.0,292.9 L57.5,292.8 L56.0,292.9 L54.5,292.7 L53.0,293.0 L51.5,292.5 L50.0,292.9 L48.5,292.6 L47.0,293.0 L45.5,292.8 L44.0,292.9 L42.5,292.9 L41.0,293.0 L39.5,292.7 L38.0,292.7 L36.5,292.5 L35.0,292.7 L33.5,292.6 L32.0,292.8 L30.5,292.8 L29.0,293.1 L27.5,292.6 L26.0,293.2 L24.5,293.1 L23.0,293.2 L21.5,292.8 L20.0,292.9 L18.5,292.8 L17.0,293.0 L15.5,292.9 L14.0,293.0 L12.5,293.2 L11.0,293.1 L9.5,292.5 L8.0,292.8 L6.5,293.1 L5.0,293.1 L3.5,292.9 L2.0,292.6Z" fill="#e3304f"/><rect x="404.5" y="299.5" width="1" height="20.80000000000001" fill="#e85a72"/><rect x="649.5" y="299" width="1" height="21.30000000000001" fill="#e85a72"/><path d="M2.0,368.8 L3.5,368.9 L5.0,369.1 L6.5,368.9 L8.0,368.9 L9.5,369.1 L11.0,369.0 L12.5,368.9 L14.0,369.4 L15.5,369.4 L17.0,369.3 L18.5,369.0 L20.0,369.1 L21.5,368.9 L23.0,369.0 L24.5,369.4 L26.0,369.3 L27.5,369.4 L29.0,368.9 L30.5,369.2 L32.0,369.4 L33.5,369.3 L35.0,369.2 L36.5,369.1 L38.0,369.3 L39.5,369.4 L41.0,368.6 L42.5,368.8 L44.0,369.1 L45.5,368.8 L47.0,369.3 L48.5,369.1 L50.0,369.1 L51.5,368.8 L53.0,369.5 L54.5,369.0 L56.0,369.3 L57.5,369.5 L59.0,368.8 L60.5,369.1 L62.0,369.2 L63.5,369.4 L65.0,369.1 L66.5,368.9 L68.0,369.2 L69.5,369.1 L71.0,369.0 L72.5,369.3 L74.0,369.4 L75.5,369.0 L77.0,369.3 L78.5,369.1 L80.0,369.1 L81.5,369.3 L83.0,369.1 L84.5,368.6 L86.0,369.1 L87.5,368.9 L89.0,369.0 L90.5,369.3 L92.0,369.0 L93.5,369.3 L95.0,369.5 L96.5,369.5 L98.0,368.8 L99.5,369.4 L101.0,369.1 L102.5,369.1 L104.0,369.5 L105.5,369.3 L107.0,369.3 L108.5,369.0 L110.0,368.9 L111.5,369.4 L113.0,369.3 L114.5,368.9 L116.0,369.1 L117.5,369.0 L119.0,369.4 L120.5,368.8 L122.0,369.0 L123.5,369.5 L125.0,368.9 L126.5,369.0 L128.0,369.4 L129.5,369.4 L131.0,368.9 L132.5,368.8 L134.0,369.2 L135.5,369.4 L137.0,369.4 L138.5,369.3 L140.0,368.8 L141.5,369.3 L143.0,369.3 L144.5,368.9 L146.0,369.5 L147.5,368.9 L149.0,368.9 L150.5,369.2 L152.0,369.2 L153.5,368.9 L155.0,368.9 L156.5,368.9 L158.0,369.0 L159.5,369.3 L161.0,368.9 L162.5,369.3 L164.0,368.9 L165.5,369.4 L167.0,369.0 L168.5,368.4 L170.0,369.3 L171.5,368.9 L173.0,369.3 L174.5,369.5 L176.0,369.5 L177.5,369.4 L179.0,368.9 L180.5,369.1 L182.0,368.9 L183.5,368.9 L185.0,369.1 L186.5,369.2 L188.0,369.0 L189.5,369.2 L191.0,369.4 L192.5,368.8 L194.0,369.2 L195.5,368.9 L197.0,369.3 L198.5,369.3 L200.0,369.2 L201.5,368.8 L203.0,369.3 L204.5,369.1 L206.0,369.4 L207.5,369.1 L209.0,368.9 L210.5,368.9 L212.0,369.4 L213.5,368.9 L215.0,369.1 L216.5,369.4 L218.0,369.2 L219.5,369.3 L221.0,369.2 L222.5,369.1 L224.0,369.3 L225.5,369.4 L227.0,369.4 L228.5,369.0 L230.0,369.3 L231.5,369.5 L233.0,369.4 L234.5,369.0 L236.0,369.1 L237.5,369.0 L239.0,369.4 L240.5,369.3 L242.0,369.4 L243.5,369.1 L245.0,369.2 L246.5,368.8 L248.0,369.1 L249.5,369.4 L251.0,369.2 L252.5,369.3 L254.0,369.4 L255.5,369.5 L257.0,369.3 L258.5,369.2 L260.0,369.1 L261.5,368.8 L263.0,368.9 L264.5,369.0 L266.0,369.1 L267.5,369.4 L269.0,369.5 L270.5,369.2 L272.0,369.3 L273.5,369.1 L275.0,369.2 L276.5,369.3 L278.0,369.2 L279.5,369.3 L281.0,369.4 L282.5,369.3 L284.0,369.4 L285.5,369.3 L287.0,368.9 L288.5,368.9 L290.0,369.2 L291.5,368.9 L293.0,368.9 L294.5,368.8 L296.0,369.4 L297.5,369.1 L299.0,369.4 L300.5,368.8 L302.0,369.2 L303.5,369.3 L305.0,369.0 L306.5,369.4 L308.0,369.5 L309.5,369.5 L311.0,369.1 L312.5,369.1 L314.0,368.8 L315.5,369.1 L317.0,369.2 L318.5,368.5 L320.0,369.5 L321.5,369.0 L323.0,369.2 L324.5,368.8 L326.0,369.2 L327.5,368.9 L329.0,368.8 L330.5,369.0 L332.0,369.4 L333.5,369.3 L335.0,368.8 L336.5,369.0 L338.0,369.1 L339.5,369.4 L341.0,369.3 L342.5,369.2 L344.0,369.0 L345.5,369.2 L347.0,369.0 L348.5,368.9 L350.0,369.2 L351.5,369.0 L353.0,369.2 L354.5,369.4 L356.0,369.0 L357.5,369.1 L359.0,369.1 L360.5,368.9 L362.0,369.4 L363.5,369.5 L365.0,369.0 L366.5,368.8 L368.0,368.9 L369.5,369.1 L371.0,368.8 L372.5,369.3 L374.0,368.9 L375.5,369.0 L376.0,368.9 L377.0,369.2 L378.5,369.8 L380.0,370.3 L381.5,371.3 L383.0,371.6 L384.5,372.1 L386.0,372.7 L387.5,373.1 L389.0,373.7 L390.5,374.4 L392.0,374.7 L393.5,375.5 L395.0,375.9 L396.5,375.9 L398.0,376.4 L399.5,377.0 L401.0,377.7 L402.5,378.5 L404.0,379.1 L405.5,379.3 L407.0,379.7 L408.5,380.0 L410.0,381.2 L411.5,381.1 L413.0,382.2 L414.5,382.4 L416.0,383.0 L417.5,383.7 L419.0,383.7 L420.5,384.2 L422.0,385.3 L423.5,385.8 L425.0,386.3 L426.5,386.2 L428.0,387.0 L429.5,387.4 L431.0,387.8 L432.5,388.9 L434.0,388.9 L435.5,389.6 L437.0,390.1 L438.5,390.8 L440.0,391.4 L441.5,392.0 L443.0,392.4 L444.5,392.6 L446.0,393.3 L447.5,394.0 L449.0,394.4 L450.5,394.9 L452.0,395.7 L452.0,421.0 L453.5,420.3 L455.0,420.8 L456.5,420.5 L458.0,421.0 L459.5,420.5 L461.0,421.0 L462.5,420.9 L464.0,420.6 L465.5,420.7 L467.0,420.4 L468.5,420.7 L470.0,420.5 L471.5,420.8 L473.0,420.7 L474.5,420.9 L476.0,420.3 L477.5,420.6 L479.0,420.5 L480.5,420.8 L482.0,420.7 L483.5,420.9 L485.0,420.6 L486.5,420.1 L488.0,420.8 L489.5,420.5 L491.0,420.7 L492.5,420.3 L494.0,420.9 L495.5,420.6 L497.0,420.5 L498.5,420.5 L500.0,420.6 L501.5,420.8 L503.0,420.4 L504.5,420.5 L506.0,420.9 L507.5,420.8 L509.0,420.6 L510.5,420.6 L512.0,420.5 L513.5,420.8 L515.0,420.5 L516.5,420.4 L518.0,420.8 L519.5,420.4 L521.0,420.9 L522.5,420.8 L524.0,420.5 L525.5,420.5 L527.0,420.6 L528.5,421.0 L530.0,419.8 L531.5,420.3 L533.0,420.8 L534.5,420.5 L536.0,420.8 L537.5,420.4 L539.0,420.7 L540.5,420.3 L542.0,420.8 L543.5,420.8 L545.0,420.7 L546.5,420.7 L548.0,420.7 L549.5,420.8 L551.0,420.7 L552.5,420.5 L554.0,420.6 L555.5,420.2 L557.0,420.9 L558.5,420.8 L560.0,420.8 L561.5,420.5 L563.0,420.9 L564.5,420.7 L566.0,420.9 L567.5,420.4 L569.0,420.7 L570.5,420.4 L572.0,420.7 L573.5,420.7 L575.0,420.5 L576.5,420.7 L578.0,420.8 L579.5,420.3 L581.0,420.9 L582.5,420.9 L584.0,420.6 L585.5,420.6 L587.0,420.6 L588.5,420.4 L590.0,420.7 L591.5,420.6 L593.0,420.3 L594.5,420.5 L596.0,420.8 L597.5,420.7 L598.0,421.0 L598.0,395.7 L599.0,395.1 L600.5,394.4 L602.0,394.1 L603.5,393.2 L605.0,393.2 L606.5,392.3 L608.0,391.9 L609.5,391.3 L611.0,390.7 L612.5,390.5 L614.0,389.8 L615.5,389.2 L617.0,388.6 L618.5,388.0 L620.0,387.7 L621.5,387.0 L623.0,386.3 L624.5,386.4 L626.0,384.8 L627.5,385.3 L629.0,384.4 L630.5,383.3 L632.0,383.4 L633.5,383.2 L635.0,382.8 L636.5,382.3 L638.0,381.7 L639.5,380.6 L641.0,380.1 L642.5,380.0 L644.0,379.2 L645.5,378.6 L647.0,378.1 L648.5,377.8 L650.0,377.5 L651.5,376.6 L653.0,376.1 L654.5,375.9 L656.0,375.2 L657.5,374.1 L659.0,374.3 L660.5,373.5 L662.0,373.1 L663.5,372.6 L665.0,372.3 L666.5,371.3 L668.0,370.9 L669.5,370.5 L671.0,370.3 L672.5,369.2 L674.0,368.9 L675.5,369.1 L677.0,368.8 L678.5,368.8 L680.0,369.2 L681.5,369.2 L683.0,369.0 L684.5,368.9 L686.0,368.9 L687.5,368.7 L689.0,369.2 L690.5,368.9 L692.0,368.8 L693.5,369.1 L695.0,369.0 L696.5,368.8 L698.0,368.9 L699.5,368.7 L701.0,369.1 L702.5,369.2 L704.0,369.1 L705.5,368.7 L707.0,369.1 L708.5,369.2 L710.0,368.6 L711.5,368.3 L713.0,369.0 L714.5,368.6 L716.0,369.0 L717.5,369.0 L719.0,368.7 L720.5,368.9 L722.0,369.1 L723.5,369.2 L725.0,368.6 L726.5,368.9 L728.0,369.2 L729.5,368.8 L731.0,368.8 L732.5,368.7 L734.0,369.1 L735.5,369.1 L737.0,368.9 L738.5,368.8 L740.0,369.3 L741.5,369.2 L743.0,369.0 L744.5,369.1 L746.0,369.0 L747.5,369.1 L749.0,369.0 L750.5,369.2 L752.0,368.7 L753.5,368.8 L755.0,368.9 L756.5,368.7 L758.0,369.0 L759.5,368.7 L761.0,368.8 L762.5,369.2 L764.0,369.3 L765.5,369.0 L767.0,369.1 L768.5,369.2 L770.0,368.7 L771.5,369.1 L773.0,368.4 L774.5,369.0 L776.0,369.2 L777.5,368.9 L779.0,369.0 L780.5,369.1 L782.0,369.1 L783.5,368.7 L785.0,369.2 L786.5,368.8 L788.0,368.7 L789.5,368.7 L791.0,369.1 L792.5,369.2 L794.0,368.7 L795.5,368.7 L797.0,368.9 L798.5,368.8 L800.0,369.2 L801.5,368.8 L803.0,368.6 L804.5,369.0 L806.0,368.8 L807.5,368.9 L809.0,368.6 L810.5,369.0 L812.0,368.8 L813.5,368.7 L815.0,368.7 L816.5,369.0 L818.0,368.7 L819.5,369.2 L821.0,369.1 L822.5,368.8 L824.0,369.1 L825.5,369.1 L827.0,368.8 L828.5,368.2 L830.0,368.1 L831.5,369.3 L833.0,368.9 L834.5,369.1 L836.0,368.6 L837.5,368.7 L839.0,368.7 L840.5,368.7 L842.0,369.1 L843.5,368.8 L845.0,368.9 L846.5,368.7 L848.0,368.7 L849.5,369.1 L851.0,368.8 L852.5,368.8 L854.0,368.8 L855.5,368.9 L857.0,368.8 L858.5,369.2 L860.0,368.6 L861.5,368.7 L863.0,368.6 L864.5,369.0 L866.0,369.0 L867.5,368.7 L869.0,369.1 L870.5,369.0 L872.0,369.1 L873.5,369.2 L875.0,369.2 L876.5,368.7 L878.0,368.7 L879.5,369.3 L881.0,368.9 L882.5,369.0 L884.0,369.2 L885.5,368.9 L887.0,368.7 L888.5,369.3 L890.0,369.1 L891.5,368.7 L893.0,369.0 L894.5,368.9 L896.0,368.7 L897.5,368.9 L899.0,368.7 L900.5,368.6 L902.0,368.9 L903.5,368.6 L905.0,368.7 L906.5,369.3 L908.0,369.1 L909.5,368.8 L911.0,369.1 L912.5,368.8 L914.0,368.9 L915.5,368.7 L917.0,368.8 L918.5,369.0 L920.0,369.2 L921.5,368.9 L923.0,369.1 L924.5,369.1 L926.0,369.2 L927.5,369.2 L929.0,369.1 L930.5,369.1 L932.0,368.7 L933.5,368.8 L935.0,368.6 L936.5,368.7 L938.0,368.8 L939.5,369.1 L941.0,369.2 L942.5,369.1 L944.0,369.2 L945.5,369.1 L947.0,368.8 L948.5,369.2 L950.0,368.7 L951.5,368.8 L953.0,369.2 L954.5,368.7 L956.0,369.3 L957.5,368.7 L959.0,368.9 L960.5,369.0 L962.0,368.8 L963.5,369.1 L965.0,369.0 L966.5,368.6 L968.0,368.7 L969.5,369.2 L971.0,369.2 L972.5,369.0 L974.0,368.7 L975.5,368.9 L977.0,368.8 L978.5,369.1 L980.0,368.7 L981.5,369.0 L983.0,368.7 L984.5,369.0 L986.0,368.2 L987.5,368.7 L989.0,369.0 L990.5,368.7 L992.0,368.6 L993.5,369.0 L995.0,368.6 L996.5,369.2 L998.0,368.9 L999.5,369.0 L1001.0,369.2 L1002.5,368.9 L1004.0,369.1 L1005.5,368.6 L1007.0,369.3 L1008.5,368.8 L1010.0,368.8 L1011.5,368.9 L1013.0,368.8 L1014.5,368.7 L1016.0,369.3 L1017.5,369.1 L1019.0,369.3 L1020.5,369.1 L1022.0,369.2 L1023.5,369.0 L1025.0,368.7 L1026.5,369.0 L1028.0,368.6 L1029.5,368.9 L1031.0,369.1 L1032.5,368.7 L1034.0,368.8 L1035.5,368.8 L1037.0,369.1 L1038.5,368.7 L1040.0,368.6 L1041.5,369.3 L1043.0,368.8 L1044.5,368.8 L1046.0,369.0 L1047.5,369.1 L1049.0,369.0 L1050.0,368.9 L1050.0,373.6 L1049.0,374.1 L1047.5,373.6 L1046.0,373.3 L1044.5,373.7 L1043.0,373.5 L1041.5,373.7 L1040.0,373.3 L1038.5,374.0 L1037.0,373.8 L1035.5,373.5 L1034.0,373.5 L1032.5,374.4 L1031.0,373.9 L1029.5,373.4 L1028.0,373.8 L1026.5,373.7 L1025.0,373.7 L1023.5,373.8 L1022.0,373.4 L1020.5,373.6 L1019.0,373.8 L1017.5,373.3 L1016.0,373.7 L1014.5,373.9 L1013.0,373.8 L1011.5,373.3 L1010.0,373.6 L1008.5,373.9 L1007.0,373.4 L1005.5,373.7 L1004.0,373.6 L1002.5,373.6 L1001.0,374.0 L999.5,373.5 L998.0,373.6 L996.5,373.3 L995.0,373.7 L993.5,373.7 L992.0,373.5 L990.5,373.8 L989.0,373.6 L987.5,373.4 L986.0,374.3 L984.5,374.0 L983.0,373.7 L981.5,374.0 L980.0,373.9 L978.5,373.6 L977.0,373.5 L975.5,373.8 L974.0,373.6 L972.5,373.6 L971.0,373.6 L969.5,373.7 L968.0,373.5 L966.5,373.6 L965.0,373.6 L963.5,373.9 L962.0,373.4 L960.5,373.5 L959.0,373.8 L957.5,373.8 L956.0,373.5 L954.5,373.6 L953.0,373.5 L951.5,373.4 L950.0,373.4 L948.5,373.4 L947.0,373.6 L945.5,373.4 L944.0,373.8 L942.5,373.8 L941.0,373.9 L939.5,373.5 L938.0,373.9 L936.5,373.5 L935.0,373.5 L933.5,373.7 L932.0,373.4 L930.5,373.3 L929.0,374.0 L927.5,373.9 L926.0,373.9 L924.5,373.8 L923.0,373.4 L921.5,373.9 L920.0,373.9 L918.5,373.9 L917.0,374.0 L915.5,373.4 L914.0,373.6 L912.5,374.0 L911.0,373.7 L909.5,373.7 L908.0,373.6 L906.5,373.8 L905.0,373.3 L903.5,373.3 L902.0,373.7 L900.5,373.7 L899.0,374.0 L897.5,374.0 L896.0,373.7 L894.5,373.5 L893.0,373.5 L891.5,373.5 L890.0,373.9 L888.5,373.9 L887.0,374.0 L885.5,373.4 L884.0,373.8 L882.5,373.6 L881.0,373.3 L879.5,373.6 L878.0,373.7 L876.5,373.8 L875.0,373.4 L873.5,373.5 L872.0,373.7 L870.5,373.8 L869.0,373.5 L867.5,373.8 L866.0,374.0 L864.5,373.3 L863.0,373.4 L861.5,373.7 L860.0,374.0 L858.5,373.6 L857.0,373.9 L855.5,373.9 L854.0,373.5 L852.5,373.6 L851.0,373.8 L849.5,373.8 L848.0,373.6 L846.5,373.7 L845.0,373.7 L843.5,373.7 L842.0,373.6 L840.5,373.4 L839.0,373.8 L837.5,373.3 L836.0,373.9 L834.5,374.0 L833.0,373.7 L831.5,373.4 L830.0,373.6 L828.5,373.8 L827.0,373.8 L825.5,373.6 L824.0,373.9 L822.5,373.5 L821.0,373.4 L819.5,373.7 L818.0,373.8 L816.5,373.9 L815.0,373.6 L813.5,373.9 L812.0,373.8 L810.5,373.9 L809.0,373.8 L807.5,373.4 L806.0,373.6 L804.5,373.8 L803.0,373.6 L801.5,373.3 L800.0,373.6 L798.5,373.4 L797.0,373.4 L795.5,373.4 L794.0,373.7 L792.5,374.0 L791.0,373.9 L789.5,374.0 L788.0,373.5 L786.5,373.6 L785.0,373.7 L783.5,373.6 L782.0,373.7 L780.5,373.7 L779.0,373.4 L777.5,373.8 L776.0,373.3 L774.5,373.7 L773.0,373.4 L771.5,373.9 L770.0,373.6 L768.5,373.7 L767.0,373.4 L765.5,373.3 L764.0,373.6 L762.5,373.5 L761.0,373.3 L759.5,373.5 L758.0,373.3 L756.5,373.5 L755.0,373.6 L753.5,373.5 L752.0,373.4 L750.5,373.3 L749.0,373.8 L747.5,373.8 L746.0,373.5 L744.5,374.0 L743.0,373.4 L741.5,373.6 L740.0,373.8 L738.5,373.3 L737.0,373.9 L735.5,373.9 L734.0,373.4 L732.5,373.7 L731.0,373.8 L729.5,373.4 L728.0,373.5 L726.5,373.9 L725.0,373.3 L723.5,373.6 L722.0,373.7 L720.5,373.6 L719.0,373.6 L717.5,373.4 L716.0,373.8 L714.5,373.7 L713.0,373.5 L711.5,373.8 L710.0,373.4 L708.5,373.8 L707.0,373.3 L705.5,373.8 L704.0,373.6 L702.5,373.6 L701.0,373.4 L699.5,373.9 L698.0,373.8 L696.5,373.8 L695.0,373.6 L693.5,373.7 L692.0,373.5 L690.5,373.7 L689.0,373.3 L687.5,373.3 L686.0,373.6 L684.5,373.4 L683.0,373.4 L681.5,373.5 L680.0,373.6 L678.5,374.0 L677.0,373.9 L675.5,373.9 L674.0,373.4 L672.5,374.2 L671.0,374.9 L669.5,375.0 L668.0,375.7 L666.5,376.0 L665.0,376.9 L663.5,377.3 L662.0,377.6 L660.5,378.5 L659.0,378.7 L657.5,380.0 L656.0,379.9 L654.5,380.7 L653.0,380.9 L651.5,381.7 L650.0,382.3 L648.5,382.7 L647.0,382.8 L645.5,383.6 L644.0,383.9 L642.5,384.9 L641.0,385.1 L639.5,385.9 L638.0,386.0 L636.5,386.8 L635.0,387.1 L633.5,388.0 L632.0,388.3 L630.5,389.0 L629.0,389.3 L627.5,390.0 L626.0,391.2 L624.5,390.9 L623.0,391.6 L621.5,391.8 L620.0,392.6 L618.5,393.0 L617.0,393.5 L615.5,393.7 L614.0,394.2 L612.5,395.0 L611.0,395.3 L609.5,396.2 L608.0,396.4 L606.5,397.2 L605.0,397.4 L603.5,398.1 L602.0,398.9 L600.5,399.1 L599.0,399.5 L598.0,399.7 L598.0,425.0 L597.5,425.7 L596.0,425.6 L594.5,425.4 L593.0,425.3 L591.5,425.2 L590.0,425.2 L588.5,425.1 L587.0,425.3 L585.5,425.7 L584.0,425.2 L582.5,425.3 L581.0,425.0 L579.5,425.1 L578.0,425.5 L576.5,425.6 L575.0,425.6 L573.5,425.2 L572.0,425.7 L570.5,425.2 L569.0,425.0 L567.5,425.2 L566.0,425.7 L564.5,425.3 L563.0,425.1 L561.5,425.4 L560.0,425.0 L558.5,425.4 L557.0,425.6 L555.5,425.8 L554.0,425.1 L552.5,425.2 L551.0,425.0 L549.5,425.0 L548.0,425.3 L546.5,425.1 L545.0,425.1 L543.5,425.6 L542.0,425.6 L540.5,425.1 L539.0,425.3 L537.5,425.6 L536.0,425.3 L534.5,425.3 L533.0,425.1 L531.5,425.6 L530.0,425.7 L528.5,425.3 L527.0,425.5 L525.5,425.5 L524.0,425.1 L522.5,425.3 L521.0,425.3 L519.5,425.3 L518.0,425.3 L516.5,425.4 L515.0,425.4 L513.5,425.5 L512.0,425.1 L510.5,425.4 L509.0,425.2 L507.5,425.3 L506.0,425.4 L504.5,425.7 L503.0,425.4 L501.5,425.6 L500.0,426.1 L498.5,425.0 L497.0,425.1 L495.5,425.1 L494.0,425.9 L492.5,425.3 L491.0,425.5 L489.5,425.2 L488.0,425.0 L486.5,426.0 L485.0,425.7 L483.5,425.5 L482.0,425.1 L480.5,425.7 L479.0,425.3 L477.5,425.3 L476.0,425.6 L474.5,425.0 L473.0,425.5 L471.5,425.5 L470.0,425.7 L468.5,425.1 L467.0,425.0 L465.5,425.5 L464.0,425.1 L462.5,425.5 L461.0,425.4 L459.5,425.1 L458.0,425.1 L456.5,425.3 L455.0,425.2 L453.5,425.2 L452.0,425.0 L452.0,399.7 L450.5,399.4 L449.0,398.7 L447.5,398.2 L446.0,398.3 L444.5,397.7 L443.0,397.1 L441.5,396.4 L440.0,396.1 L438.5,395.2 L437.0,394.5 L435.5,394.4 L434.0,393.6 L432.5,393.1 L431.0,392.6 L429.5,392.3 L428.0,391.9 L426.5,391.6 L425.0,390.6 L423.5,390.4 L422.0,389.9 L420.5,389.1 L419.0,388.7 L417.5,388.5 L416.0,387.5 L414.5,387.3 L413.0,386.5 L411.5,386.0 L410.0,385.3 L408.5,385.2 L407.0,384.7 L405.5,383.8 L404.0,383.5 L402.5,383.3 L401.0,382.3 L399.5,382.1 L398.0,381.5 L396.5,381.0 L395.0,380.5 L393.5,379.7 L392.0,379.4 L390.5,378.9 L389.0,378.7 L387.5,377.6 L386.0,377.3 L384.5,376.8 L383.0,376.0 L381.5,375.9 L380.0,375.6 L378.5,374.5 L377.0,374.4 L376.0,373.8 L375.5,373.9 L374.0,373.9 L372.5,374.1 L371.0,373.8 L369.5,373.7 L368.0,373.6 L366.5,373.6 L365.0,374.0 L363.5,373.8 L362.0,374.1 L360.5,373.5 L359.0,373.8 L357.5,374.0 L356.0,373.5 L354.5,374.0 L353.0,374.2 L351.5,373.8 L350.0,373.9 L348.5,374.2 L347.0,373.7 L345.5,374.0 L344.0,374.0 L342.5,374.0 L341.0,373.6 L339.5,374.0 L338.0,373.8 L336.5,373.9 L335.0,374.0 L333.5,374.1 L332.0,374.1 L330.5,373.7 L329.0,374.0 L327.5,374.1 L326.0,373.7 L324.5,373.9 L323.0,374.2 L321.5,373.9 L320.0,374.1 L318.5,374.5 L317.0,374.0 L315.5,373.6 L314.0,374.1 L312.5,373.7 L311.0,373.8 L309.5,373.8 L308.0,373.9 L306.5,373.7 L305.0,373.6 L303.5,374.2 L302.0,373.8 L300.5,373.8 L299.0,373.9 L297.5,373.6 L296.0,373.5 L294.5,373.5 L293.0,374.0 L291.5,373.8 L290.0,373.6 L288.5,373.6 L287.0,374.2 L285.5,374.0 L284.0,373.7 L282.5,373.6 L281.0,374.0 L279.5,373.7 L278.0,374.1 L276.5,373.8 L275.0,373.9 L273.5,373.8 L272.0,373.9 L270.5,373.8 L269.0,373.7 L267.5,374.1 L266.0,373.8 L264.5,373.7 L263.0,374.1 L261.5,373.6 L260.0,374.0 L258.5,373.8 L257.0,373.9 L255.5,374.1 L254.0,374.1 L252.5,374.0 L251.0,373.7 L249.5,374.0 L248.0,373.6 L246.5,373.8 L245.0,374.2 L243.5,373.6 L242.0,373.6 L240.5,373.6 L239.0,373.8 L237.5,373.7 L236.0,374.2 L234.5,373.6 L233.0,373.5 L231.5,374.2 L230.0,374.1 L228.5,374.0 L227.0,373.9 L225.5,373.9 L224.0,373.7 L222.5,374.4 L221.0,373.6 L219.5,373.8 L218.0,373.9 L216.5,373.9 L215.0,374.2 L213.5,374.1 L212.0,373.5 L210.5,373.8 L209.0,373.9 L207.5,374.1 L206.0,374.2 L204.5,373.9 L203.0,374.0 L201.5,373.6 L200.0,373.8 L198.5,374.1 L197.0,374.0 L195.5,374.1 L194.0,373.6 L192.5,374.0 L191.0,374.1 L189.5,374.2 L188.0,373.6 L186.5,373.8 L185.0,374.1 L183.5,373.9 L182.0,374.0 L180.5,374.1 L179.0,374.2 L177.5,373.8 L176.0,373.5 L174.5,374.1 L173.0,373.6 L171.5,373.6 L170.0,374.0 L168.5,374.2 L167.0,374.0 L165.5,374.2 L164.0,374.1 L162.5,374.1 L161.0,373.6 L159.5,374.0 L158.0,374.0 L156.5,374.1 L155.0,374.0 L153.5,373.8 L152.0,373.6 L150.5,373.8 L149.0,374.1 L147.5,374.2 L146.0,374.0 L144.5,374.1 L143.0,373.6 L141.5,373.6 L140.0,373.6 L138.5,373.7 L137.0,374.1 L135.5,373.6 L134.0,374.0 L132.5,373.9 L131.0,374.1 L129.5,373.7 L128.0,373.7 L126.5,373.8 L125.0,373.6 L123.5,373.6 L122.0,373.6 L120.5,373.5 L119.0,373.8 L117.5,374.0 L116.0,373.7 L114.5,373.6 L113.0,373.5 L111.5,373.8 L110.0,374.2 L108.5,373.8 L107.0,373.8 L105.5,374.0 L104.0,373.8 L102.5,374.0 L101.0,373.8 L99.5,373.6 L98.0,374.1 L96.5,373.9 L95.0,373.9 L93.5,373.7 L92.0,374.2 L90.5,374.0 L89.0,373.7 L87.5,373.6 L86.0,374.0 L84.5,373.8 L83.0,374.0 L81.5,373.7 L80.0,373.6 L78.5,373.6 L77.0,373.6 L75.5,374.1 L74.0,373.9 L72.5,374.1 L71.0,373.8 L69.5,373.5 L68.0,373.6 L66.5,374.0 L65.0,374.0 L63.5,373.6 L62.0,373.7 L60.5,373.7 L59.0,373.6 L57.5,373.6 L56.0,374.0 L54.5,373.5 L53.0,373.5 L51.5,374.4 L50.0,373.6 L48.5,374.1 L47.0,373.7 L45.5,373.6 L44.0,373.9 L42.5,374.0 L41.0,373.7 L39.5,373.8 L38.0,374.0 L36.5,374.2 L35.0,373.8 L33.5,373.5 L32.0,373.7 L30.5,374.0 L29.0,373.7 L27.5,373.8 L26.0,373.8 L24.5,374.2 L23.0,374.0 L21.5,373.5 L20.0,373.8 L18.5,373.6 L17.0,373.8 L15.5,374.0 L14.0,374.1 L12.5,374.2 L11.0,373.9 L9.5,373.6 L8.0,374.1 L6.5,373.8 L5.0,373.9 L3.5,373.6 L2.0,373.8Z" fill="#86c928"/><path d="M2,371.5 L376,371.5 L452,397.7 M452,423 L598,423 M598,397.7 L674,371.3 L1050,371.3" stroke="#86c928" stroke-width="5.0" stroke-linejoin="round" fill="none"/><rect x="451.5" y="397.7" width="1" height="25.30000000000001" fill="#98cc50"/><rect x="597.5" y="397.7" width="1" height="25.30000000000001" fill="#98cc50"/><path d="M2.0,442.2 L3.5,442.3 L5.0,442.7 L6.5,442.6 L8.0,442.9 L9.5,442.1 L11.0,442.8 L12.5,442.0 L14.0,442.1 L15.5,442.8 L17.0,443.1 L18.5,442.8 L20.0,443.1 L21.5,443.1 L23.0,442.8 L24.5,442.9 L26.0,442.3 L27.5,442.4 L29.0,442.7 L30.5,442.4 L32.0,442.9 L33.5,443.0 L35.0,443.1 L36.5,442.4 L38.0,442.5 L39.5,442.3 L41.0,442.9 L42.5,442.5 L44.0,442.4 L45.5,443.0 L47.0,442.9 L48.5,442.5 L50.0,442.6 L51.5,441.8 L53.0,442.4 L54.5,442.0 L56.0,442.3 L57.5,443.0 L59.0,442.7 L60.5,442.1 L62.0,442.6 L63.5,442.0 L65.0,443.1 L66.5,442.0 L68.0,441.8 L69.5,443.0 L71.0,442.3 L72.5,442.5 L74.0,442.7 L75.5,442.7 L77.0,441.8 L78.5,442.9 L80.0,442.3 L81.5,441.9 L83.0,443.0 L84.5,441.9 L86.0,443.0 L87.5,442.5 L89.0,442.1 L90.5,442.6 L92.0,442.5 L93.5,441.9 L95.0,441.8 L96.5,442.3 L98.0,442.6 L99.5,442.5 L101.0,442.2 L102.5,442.2 L104.0,442.3 L105.5,442.7 L107.0,441.8 L108.5,443.0 L110.0,442.3 L111.5,442.4 L113.0,442.2 L114.5,442.1 L116.0,442.5 L117.5,442.4 L119.0,442.5 L120.5,443.0 L122.0,442.6 L123.5,442.6 L125.0,441.1 L126.5,442.5 L128.0,441.9 L129.5,442.8 L131.0,442.5 L132.5,442.1 L134.0,443.0 L135.5,442.2 L137.0,443.0 L138.5,442.0 L140.0,441.9 L141.5,443.0 L143.0,442.8 L144.5,442.9 L146.0,442.4 L147.5,442.0 L149.0,442.7 L150.5,442.7 L152.0,442.6 L153.5,442.7 L155.0,442.4 L156.5,442.3 L158.0,442.8 L159.5,442.1 L161.0,442.5 L162.5,442.8 L164.0,442.7 L165.5,442.6 L167.0,442.1 L168.5,441.9 L170.0,442.4 L171.5,442.7 L173.0,442.6 L174.5,442.4 L176.0,442.7 L177.5,443.1 L179.0,443.0 L180.5,442.0 L182.0,442.8 L183.5,442.6 L185.0,442.2 L186.5,443.0 L188.0,442.8 L189.5,442.3 L191.0,441.8 L192.5,443.0 L194.0,442.0 L195.5,442.6 L197.0,443.0 L198.5,441.8 L200.0,442.7 L201.5,441.8 L203.0,442.6 L204.5,441.9 L206.0,442.3 L207.5,442.9 L209.0,442.9 L210.5,442.5 L212.0,441.9 L213.5,441.2 L215.0,442.9 L216.5,442.9 L218.0,442.2 L219.5,442.1 L221.0,442.2 L222.5,442.9 L224.0,442.6 L225.5,442.6 L227.0,442.7 L228.5,441.9 L230.0,442.1 L231.5,442.8 L233.0,442.7 L234.5,443.0 L236.0,442.1 L237.5,442.9 L239.0,442.6 L240.5,442.0 L242.0,442.7 L243.5,442.1 L245.0,442.2 L246.5,442.1 L248.0,442.7 L249.5,442.7 L251.0,441.8 L252.5,442.4 L254.0,442.6 L255.5,441.9 L257.0,442.2 L258.5,442.2 L260.0,443.1 L261.5,442.9 L263.0,442.9 L264.5,442.1 L266.0,442.7 L267.5,442.2 L269.0,442.5 L270.5,442.0 L272.0,442.4 L273.5,441.9 L275.0,442.2 L276.5,442.9 L278.0,442.0 L279.5,442.3 L281.0,443.0 L282.5,442.8 L284.0,441.9 L285.5,442.5 L287.0,442.6 L288.5,442.2 L290.0,442.9 L291.5,442.6 L293.0,441.9 L294.5,443.1 L296.0,442.4 L297.5,442.4 L299.0,442.1 L300.5,442.5 L302.0,443.0 L303.5,442.9 L305.0,442.0 L306.5,442.9 L308.0,441.8 L309.5,442.3 L311.0,443.0 L312.5,441.9 L314.0,442.9 L315.5,442.0 L317.0,442.1 L318.5,443.0 L320.0,442.4 L321.5,443.1 L323.0,442.4 L324.5,441.9 L326.0,442.8 L327.5,442.1 L329.0,442.6 L330.5,442.2 L332.0,441.9 L333.0,442.6 L333.5,444.9 L335.0,448.7 L336.5,452.6 L338.0,455.6 L339.5,459.3 L341.0,462.9 L342.5,467.5 L344.0,470.9 L345.5,474.4 L347.0,477.6 L348.5,480.8 L350.0,484.2 L351.5,488.6 L353.0,491.6 L354.5,495.0 L356.0,498.2 L357.5,502.2 L359.0,506.1 L360.0,508.6 L360.5,509.2 L362.0,510.8 L363.5,513.1 L365.0,515.9 L366.0,517.0 L366.5,516.8 L368.0,517.9 L369.5,519.6 L371.0,519.7 L372.0,521.1 L372.5,520.6 L374.0,520.6 L375.5,521.6 L377.0,522.2 L378.5,522.6 L380.0,522.0 L381.5,520.2 L383.0,521.1 L384.5,519.9 L386.0,520.0 L387.5,520.6 L389.0,520.8 L390.5,520.5 L392.0,520.4 L393.5,520.3 L395.0,520.1 L396.5,520.6 L398.0,519.9 L399.5,520.2 L401.0,519.2 L402.5,520.7 L404.0,520.4 L405.5,520.6 L407.0,519.9 L408.5,520.1 L410.0,520.0 L411.5,520.9 L413.0,520.0 L414.5,520.8 L416.0,520.7 L417.5,520.6 L419.0,520.3 L420.5,519.9 L422.0,520.1 L423.5,520.7 L425.0,520.5 L426.5,520.5 L428.0,520.1 L429.5,520.1 L431.0,520.7 L432.5,520.4 L434.0,521.0 L435.5,520.9 L437.0,520.1 L438.5,520.2 L440.0,520.8 L441.5,520.8 L443.0,520.3 L444.5,520.8 L446.0,520.7 L447.5,519.9 L449.0,520.3 L450.5,521.1 L452.0,520.9 L453.5,520.2 L455.0,519.9 L456.5,520.6 L458.0,520.5 L459.5,520.6 L461.0,521.1 L462.5,520.5 L464.0,519.9 L465.5,520.0 L467.0,520.4 L468.5,520.7 L470.0,520.3 L471.5,521.0 L473.0,520.0 L474.5,520.1 L476.0,520.8 L477.5,520.0 L479.0,520.8 L480.5,520.8 L482.0,520.1 L483.5,520.7 L485.0,520.4 L486.5,520.8 L488.0,520.8 L489.5,520.6 L491.0,521.0 L492.5,520.4 L494.0,520.4 L495.5,520.1 L497.0,520.4 L498.5,520.6 L500.0,520.0 L501.5,520.4 L503.0,519.9 L504.5,520.8 L506.0,520.8 L507.5,520.2 L509.0,520.2 L510.5,519.8 L512.0,520.2 L513.5,520.5 L515.0,520.0 L516.5,521.0 L518.0,520.9 L519.5,520.4 L521.0,520.9 L522.5,519.8 L524.0,520.7 L525.5,520.1 L527.0,520.8 L528.5,520.6 L530.0,520.4 L531.5,520.3 L533.0,521.1 L534.5,520.3 L536.0,520.6 L537.5,519.9 L539.0,519.9 L540.5,520.5 L542.0,520.8 L543.5,520.6 L545.0,520.1 L546.5,520.6 L548.0,519.9 L549.5,520.9 L551.0,520.7 L552.5,520.0 L554.0,520.5 L555.5,519.9 L557.0,520.3 L558.5,520.3 L560.0,520.9 L561.5,520.4 L563.0,520.5 L564.5,520.4 L566.0,519.9 L567.5,521.0 L569.0,520.8 L570.5,520.9 L572.0,519.9 L573.5,520.5 L575.0,520.9 L576.5,521.1 L578.0,520.1 L579.5,520.8 L581.0,521.0 L582.5,520.6 L584.0,520.2 L585.5,520.4 L587.0,520.5 L588.5,520.2 L590.0,521.0 L591.5,519.8 L593.0,520.9 L594.5,520.5 L596.0,520.9 L597.5,520.3 L599.0,521.1 L600.5,520.8 L602.0,521.0 L603.5,520.4 L605.0,519.7 L606.5,520.4 L608.0,520.3 L609.5,520.8 L611.0,520.6 L612.5,520.8 L614.0,520.6 L615.5,519.8 L617.0,520.3 L618.5,520.2 L620.0,520.7 L621.5,520.5 L623.0,520.8 L624.5,520.8 L626.0,520.6 L627.5,519.9 L629.0,521.0 L630.5,519.1 L632.0,520.5 L633.5,520.6 L635.0,520.3 L636.5,520.8 L638.0,520.4 L639.5,519.9 L641.0,520.7 L642.5,520.5 L644.0,520.8 L645.5,520.5 L647.0,521.0 L648.5,520.3 L650.0,521.1 L651.5,520.3 L653.0,519.9 L654.5,520.2 L656.0,520.3 L657.5,520.5 L659.0,520.9 L660.5,521.1 L662.0,519.9 L663.5,521.0 L665.0,520.7 L666.5,521.0 L668.0,519.9 L669.5,520.0 L671.0,520.5 L672.5,520.9 L674.0,519.9 L675.5,520.2 L677.0,520.7 L678.5,522.0 L680.0,520.6 L681.5,519.5 L683.0,519.6 L684.0,518.4 L684.5,517.3 L686.0,516.5 L687.5,514.8 L689.0,513.0 L690.0,512.1 L690.5,511.1 L692.0,508.0 L693.5,503.6 L695.0,500.4 L696.5,496.3 L698.0,492.3 L699.5,488.6 L701.0,485.5 L702.5,481.4 L704.0,477.5 L705.5,474.1 L707.0,470.9 L708.5,467.1 L710.0,462.6 L711.5,460.1 L713.0,455.9 L714.5,452.4 L716.0,449.1 L717.5,445.4 L719.0,443.1 L720.5,442.9 L722.0,443.2 L723.5,442.8 L725.0,443.5 L726.5,443.0 L728.0,442.8 L729.5,442.6 L731.0,442.3 L732.5,442.4 L734.0,442.5 L735.5,442.7 L737.0,443.2 L738.5,443.2 L740.0,443.5 L741.5,442.4 L743.0,442.5 L744.5,443.0 L746.0,443.2 L747.5,443.4 L749.0,442.6 L750.5,442.4 L752.0,443.5 L753.5,443.3 L755.0,443.0 L756.5,442.9 L758.0,443.4 L759.5,443.1 L761.0,442.0 L762.5,443.2 L764.0,442.9 L765.5,443.1 L767.0,443.0 L768.5,442.8 L770.0,443.5 L771.5,443.4 L773.0,442.4 L774.5,443.4 L776.0,442.8 L777.5,442.7 L779.0,442.7 L780.5,443.1 L782.0,442.8 L783.5,442.5 L785.0,442.9 L786.5,443.4 L788.0,442.4 L789.5,442.4 L791.0,443.3 L792.5,442.8 L794.0,443.0 L795.5,443.2 L797.0,442.9 L798.5,442.9 L800.0,443.3 L801.5,443.2 L803.0,442.9 L804.5,443.4 L806.0,443.3 L807.5,443.4 L809.0,443.5 L810.5,443.1 L812.0,442.9 L813.5,442.8 L815.0,443.4 L816.5,443.1 L818.0,443.3 L819.5,443.4 L821.0,443.5 L822.5,442.8 L824.0,442.9 L825.5,443.0 L827.0,441.6 L828.5,443.1 L830.0,443.3 L831.5,442.7 L833.0,442.4 L834.5,443.1 L836.0,442.6 L837.5,442.4 L839.0,443.2 L840.5,442.5 L842.0,443.1 L843.5,442.9 L845.0,443.6 L846.5,442.5 L848.0,443.3 L849.5,442.7 L851.0,442.9 L852.5,442.9 L854.0,442.7 L855.5,442.4 L857.0,443.1 L858.5,442.9 L860.0,443.4 L861.5,443.0 L863.0,443.2 L864.5,443.0 L866.0,443.1 L867.5,443.0 L869.0,442.7 L870.5,441.3 L872.0,442.4 L873.5,443.3 L875.0,442.9 L876.5,442.9 L878.0,442.4 L879.5,442.8 L881.0,442.8 L882.5,443.2 L884.0,442.4 L885.5,443.4 L887.0,443.5 L888.5,443.0 L890.0,442.6 L891.5,442.8 L893.0,442.9 L894.5,442.5 L896.0,442.5 L897.5,442.4 L899.0,443.3 L900.5,443.4 L902.0,443.3 L903.5,443.0 L905.0,443.0 L906.5,443.4 L908.0,442.9 L909.5,443.2 L911.0,442.8 L912.5,442.9 L914.0,442.5 L915.5,443.3 L917.0,442.7 L918.5,443.2 L920.0,442.1 L921.5,443.2 L923.0,442.6 L924.5,443.3 L926.0,443.3 L927.5,443.1 L929.0,443.3 L930.5,441.4 L932.0,442.9 L933.5,443.2 L935.0,443.5 L936.5,443.2 L938.0,442.5 L939.5,443.3 L941.0,443.0 L942.5,442.3 L944.0,442.6 L945.5,443.0 L947.0,443.3 L948.5,442.7 L950.0,442.9 L951.5,442.6 L953.0,443.0 L954.5,442.5 L956.0,442.6 L957.5,442.4 L959.0,442.4 L960.5,443.5 L962.0,443.5 L963.5,442.4 L965.0,442.7 L966.5,443.5 L968.0,442.8 L969.5,443.4 L971.0,442.9 L972.5,443.0 L974.0,442.5 L975.5,443.4 L977.0,443.2 L978.5,442.8 L980.0,443.3 L981.5,443.1 L983.0,442.5 L984.5,442.3 L986.0,442.5 L987.5,442.6 L989.0,443.5 L990.5,442.8 L992.0,442.9 L993.5,443.2 L995.0,443.5 L996.5,443.4 L998.0,442.5 L999.5,443.2 L1001.0,442.9 L1002.5,443.0 L1004.0,443.4 L1005.5,443.4 L1007.0,442.5 L1008.5,442.5 L1010.0,442.5 L1011.5,441.4 L1013.0,442.6 L1014.5,442.8 L1016.0,442.7 L1017.5,443.3 L1019.0,442.7 L1020.5,442.4 L1022.0,442.8 L1023.5,442.9 L1025.0,443.3 L1026.5,442.5 L1028.0,442.9 L1029.5,443.0 L1031.0,442.5 L1032.5,442.7 L1034.0,443.2 L1035.5,443.2 L1037.0,443.1 L1038.5,443.4 L1040.0,443.1 L1041.5,443.2 L1043.0,443.1 L1044.5,442.7 L1046.0,442.6 L1047.5,443.6 L1049.0,443.4 L1050.0,442.8 L1050.0,451.9 L1049.0,452.0 L1047.5,451.7 L1046.0,451.6 L1044.5,452.6 L1043.0,451.9 L1041.5,451.6 L1040.0,452.5 L1038.5,452.2 L1037.0,452.3 L1035.5,452.7 L1034.0,451.9 L1032.5,451.6 L1031.0,452.1 L1029.5,452.1 L1028.0,452.2 L1026.5,452.3 L1025.0,451.4 L1023.5,451.8 L1022.0,452.0 L1020.5,452.4 L1019.0,452.2 L1017.5,452.5 L1016.0,451.7 L1014.5,451.6 L1013.0,451.5 L1011.5,451.9 L1010.0,451.5 L1008.5,452.2 L1007.0,451.5 L1005.5,451.5 L1004.0,451.8 L1002.5,452.3 L1001.0,451.4 L999.5,451.5 L998.0,452.7 L996.5,451.9 L995.0,452.5 L993.5,451.8 L992.0,452.2 L990.5,451.9 L989.0,452.0 L987.5,452.4 L986.0,451.5 L984.5,452.3 L983.0,452.3 L981.5,451.8 L980.0,452.6 L978.5,451.9 L977.0,452.1 L975.5,452.4 L974.0,451.7 L972.5,451.4 L971.0,451.6 L969.5,451.8 L968.0,452.3 L966.5,452.5 L965.0,451.8 L963.5,452.3 L962.0,452.5 L960.5,451.4 L959.0,452.1 L957.5,451.9 L956.0,452.5 L954.5,451.4 L953.0,451.5 L951.5,453.7 L950.0,452.3 L948.5,452.3 L947.0,452.5 L945.5,452.1 L944.0,452.3 L942.5,452.6 L941.0,452.6 L939.5,452.4 L938.0,451.5 L936.5,452.3 L935.0,452.5 L933.5,452.6 L932.0,452.0 L930.5,452.9 L929.0,452.1 L927.5,452.5 L926.0,451.7 L924.5,452.2 L923.0,451.5 L921.5,452.0 L920.0,452.7 L918.5,452.4 L917.0,452.2 L915.5,452.3 L914.0,452.1 L912.5,452.5 L911.0,451.8 L909.5,451.7 L908.0,452.1 L906.5,452.6 L905.0,452.7 L903.5,451.8 L902.0,452.2 L900.5,452.4 L899.0,451.4 L897.5,451.4 L896.0,452.7 L894.5,451.6 L893.0,452.3 L891.5,451.9 L890.0,452.4 L888.5,452.5 L887.0,451.9 L885.5,452.3 L884.0,452.2 L882.5,452.4 L881.0,451.5 L879.5,451.5 L878.0,452.0 L876.5,451.6 L875.0,451.5 L873.5,451.6 L872.0,451.7 L870.5,452.1 L869.0,452.0 L867.5,452.3 L866.0,451.9 L864.5,451.8 L863.0,452.1 L861.5,452.5 L860.0,452.4 L858.5,452.5 L857.0,451.5 L855.5,452.4 L854.0,451.5 L852.5,452.0 L851.0,452.6 L849.5,451.9 L848.0,451.6 L846.5,451.5 L845.0,452.5 L843.5,452.5 L842.0,452.4 L840.5,452.4 L839.0,452.5 L837.5,452.7 L836.0,452.2 L834.5,452.6 L833.0,451.8 L831.5,452.2 L830.0,452.3 L828.5,451.5 L827.0,452.5 L825.5,452.5 L824.0,451.4 L822.5,452.7 L821.0,451.8 L819.5,452.1 L818.0,451.4 L816.5,452.2 L815.0,452.6 L813.5,451.9 L812.0,451.5 L810.5,452.1 L809.0,452.0 L807.5,453.1 L806.0,452.2 L804.5,451.8 L803.0,452.5 L801.5,451.5 L800.0,452.2 L798.5,451.8 L797.0,452.5 L795.5,451.6 L794.0,451.6 L792.5,452.2 L791.0,453.7 L789.5,452.5 L788.0,452.7 L786.5,452.3 L785.0,451.7 L783.5,451.9 L782.0,451.5 L780.5,452.6 L779.0,452.0 L777.5,452.0 L776.0,451.7 L774.5,451.6 L773.0,451.7 L771.5,452.3 L770.0,451.6 L768.5,452.0 L767.0,452.1 L765.5,452.3 L764.0,451.8 L762.5,452.0 L761.0,452.3 L759.5,452.3 L758.0,451.6 L756.5,451.8 L755.0,451.9 L753.5,451.9 L752.0,452.2 L750.5,451.6 L749.0,452.0 L747.5,451.6 L746.0,452.1 L744.5,452.0 L743.0,452.1 L741.5,451.9 L740.0,451.8 L738.5,452.7 L737.0,452.5 L735.5,451.6 L734.0,452.4 L732.5,452.3 L731.0,452.5 L729.5,451.6 L728.0,451.5 L726.5,452.7 L725.0,452.6 L723.5,452.3 L722.0,451.4 L720.5,452.5 L719.0,452.0 L717.5,450.7 L716.0,454.3 L714.5,457.2 L713.0,461.8 L711.5,464.7 L710.0,468.3 L708.5,472.8 L707.0,475.6 L705.5,479.6 L704.0,482.7 L702.5,487.0 L701.0,490.1 L699.5,494.0 L698.0,498.1 L696.5,502.0 L695.0,505.8 L693.5,508.6 L692.0,513.4 L690.5,515.8 L690.0,517.6 L689.0,518.8 L687.5,519.9 L686.0,522.0 L684.5,524.4 L684.0,524.5 L683.0,524.1 L681.5,525.1 L680.0,525.6 L678.5,526.5 L677.0,529.4 L675.5,529.8 L674.0,529.5 L672.5,530.2 L671.0,529.0 L669.5,529.6 L668.0,529.9 L666.5,529.8 L665.0,529.1 L663.5,529.6 L662.0,529.7 L660.5,529.0 L659.0,530.0 L657.5,530.0 L656.0,529.9 L654.5,530.1 L653.0,529.6 L651.5,529.0 L650.0,529.5 L648.5,529.7 L647.0,528.9 L645.5,530.1 L644.0,529.7 L642.5,528.9 L641.0,529.5 L639.5,529.5 L638.0,530.1 L636.5,528.9 L635.0,529.0 L633.5,529.9 L632.0,529.8 L630.5,530.5 L629.0,529.7 L627.5,530.1 L626.0,529.2 L624.5,529.9 L623.0,529.6 L621.5,529.7 L620.0,529.7 L618.5,528.9 L617.0,529.3 L615.5,529.7 L614.0,529.5 L612.5,529.6 L611.0,530.2 L609.5,529.9 L608.0,529.0 L606.5,529.0 L605.0,530.3 L603.5,529.7 L602.0,529.9 L600.5,529.2 L599.0,528.9 L597.5,529.7 L596.0,529.2 L594.5,530.2 L593.0,529.9 L591.5,530.2 L590.0,529.2 L588.5,529.1 L587.0,529.3 L585.5,529.0 L584.0,528.9 L582.5,530.2 L581.0,529.0 L579.5,530.0 L578.0,529.5 L576.5,529.7 L575.0,529.3 L573.5,529.6 L572.0,529.5 L570.5,529.6 L569.0,529.9 L567.5,529.4 L566.0,530.1 L564.5,529.3 L563.0,529.1 L561.5,529.7 L560.0,529.2 L558.5,529.0 L557.0,530.0 L555.5,529.8 L554.0,529.0 L552.5,529.1 L551.0,530.9 L549.5,529.5 L548.0,529.5 L546.5,530.0 L545.0,529.1 L543.5,529.9 L542.0,529.9 L540.5,530.2 L539.0,529.2 L537.5,529.4 L536.0,529.7 L534.5,529.0 L533.0,530.1 L531.5,530.0 L530.0,530.2 L528.5,530.2 L527.0,529.4 L525.5,528.9 L524.0,529.9 L522.5,529.3 L521.0,528.9 L519.5,529.6 L518.0,529.5 L516.5,529.5 L515.0,530.1 L513.5,529.4 L512.0,529.5 L510.5,529.9 L509.0,529.8 L507.5,529.5 L506.0,529.9 L504.5,529.6 L503.0,530.2 L501.5,529.8 L500.0,530.2 L498.5,529.5 L497.0,529.3 L495.5,529.2 L494.0,529.7 L492.5,528.9 L491.0,529.2 L489.5,530.1 L488.0,529.1 L486.5,529.6 L485.0,530.0 L483.5,529.7 L482.0,529.1 L480.5,529.4 L479.0,529.6 L477.5,529.4 L476.0,530.0 L474.5,529.1 L473.0,530.1 L471.5,528.9 L470.0,529.7 L468.5,529.7 L467.0,529.6 L465.5,530.1 L464.0,529.5 L462.5,528.9 L461.0,530.0 L459.5,529.4 L458.0,529.5 L456.5,529.2 L455.0,528.9 L453.5,529.1 L452.0,529.0 L450.5,530.2 L449.0,529.9 L447.5,529.7 L446.0,529.6 L444.5,529.6 L443.0,530.1 L441.5,529.1 L440.0,529.6 L438.5,530.0 L437.0,529.7 L435.5,529.0 L434.0,529.0 L432.5,529.4 L431.0,530.0 L429.5,529.8 L428.0,529.3 L426.5,529.8 L425.0,529.1 L423.5,530.2 L422.0,529.2 L420.5,530.2 L419.0,530.2 L417.5,529.9 L416.0,528.9 L414.5,530.0 L413.0,530.0 L411.5,528.9 L410.0,529.9 L408.5,529.2 L407.0,530.0 L405.5,529.0 L404.0,528.9 L402.5,529.2 L401.0,530.5 L399.5,529.1 L398.0,530.1 L396.5,529.5 L395.0,529.4 L393.5,530.0 L392.0,528.9 L390.5,529.7 L389.0,529.9 L387.5,529.7 L386.0,529.4 L384.5,530.4 L383.0,529.5 L381.5,528.9 L380.0,527.8 L378.5,527.1 L377.0,526.9 L375.5,527.0 L374.0,526.4 L372.5,525.9 L372.0,525.8 L371.0,526.1 L369.5,524.4 L368.0,523.6 L366.5,522.4 L366.0,521.7 L365.0,521.1 L363.5,518.5 L362.0,516.1 L360.5,514.6 L360.0,513.6 L359.0,511.9 L357.5,507.2 L356.0,503.8 L354.5,500.5 L353.0,496.9 L351.5,492.9 L350.0,490.4 L348.5,485.9 L347.0,482.2 L345.5,479.2 L344.0,476.3 L342.5,472.2 L341.0,468.2 L339.5,464.9 L338.0,461.8 L336.5,457.7 L335.0,455.0 L333.5,451.2 L333.0,451.1 L332.0,451.0 L330.5,451.7 L329.0,451.7 L327.5,453.1 L326.0,452.0 L324.5,452.1 L323.0,451.4 L321.5,452.1 L320.0,452.1 L318.5,451.4 L317.0,452.2 L315.5,451.0 L314.0,452.2 L312.5,451.3 L311.0,452.0 L309.5,451.7 L308.0,451.0 L306.5,451.3 L305.0,452.0 L303.5,452.0 L302.0,451.5 L300.5,451.5 L299.0,451.8 L297.5,451.7 L296.0,451.3 L294.5,451.3 L293.0,451.2 L291.5,452.2 L290.0,451.3 L288.5,452.0 L287.0,452.2 L285.5,451.3 L284.0,452.0 L282.5,451.5 L281.0,451.6 L279.5,451.0 L278.0,451.4 L276.5,451.3 L275.0,451.5 L273.5,450.9 L272.0,451.9 L270.5,451.8 L269.0,451.9 L267.5,451.3 L266.0,452.1 L264.5,451.4 L263.0,451.6 L261.5,451.6 L260.0,451.2 L258.5,452.1 L257.0,451.7 L255.5,451.0 L254.0,451.6 L252.5,451.6 L251.0,451.0 L249.5,451.0 L248.0,452.1 L246.5,451.6 L245.0,451.4 L243.5,452.0 L242.0,451.3 L240.5,451.5 L239.0,451.3 L237.5,451.9 L236.0,452.0 L234.5,451.8 L233.0,451.4 L231.5,451.0 L230.0,451.6 L228.5,451.9 L227.0,452.1 L225.5,451.9 L224.0,451.6 L222.5,451.4 L221.0,451.3 L219.5,451.4 L218.0,451.0 L216.5,451.3 L215.0,451.7 L213.5,450.9 L212.0,451.5 L210.5,451.6 L209.0,451.2 L207.5,452.0 L206.0,451.8 L204.5,451.2 L203.0,451.1 L201.5,451.0 L200.0,451.3 L198.5,451.7 L197.0,451.2 L195.5,452.1 L194.0,451.1 L192.5,452.2 L191.0,451.9 L189.5,451.5 L188.0,451.6 L186.5,451.0 L185.0,452.1 L183.5,451.9 L182.0,451.3 L180.5,451.6 L179.0,451.2 L177.5,451.8 L176.0,451.8 L174.5,451.2 L173.0,451.8 L171.5,451.1 L170.0,451.8 L168.5,451.2 L167.0,452.1 L165.5,451.5 L164.0,451.4 L162.5,451.1 L161.0,452.1 L159.5,451.1 L158.0,451.7 L156.5,452.1 L155.0,451.1 L153.5,450.9 L152.0,451.7 L150.5,451.7 L149.0,452.1 L147.5,451.1 L146.0,451.3 L144.5,451.2 L143.0,452.1 L141.5,451.7 L140.0,452.1 L138.5,451.8 L137.0,451.9 L135.5,451.5 L134.0,451.7 L132.5,452.0 L131.0,451.4 L129.5,451.8 L128.0,452.0 L126.5,451.3 L125.0,453.1 L123.5,451.2 L122.0,451.5 L120.5,450.9 L119.0,451.4 L117.5,451.4 L116.0,451.4 L114.5,451.6 L113.0,451.7 L111.5,452.1 L110.0,451.9 L108.5,451.8 L107.0,451.1 L105.5,452.0 L104.0,451.9 L102.5,451.2 L101.0,451.9 L99.5,452.0 L98.0,450.9 L96.5,451.6 L95.0,451.2 L93.5,451.6 L92.0,451.7 L90.5,451.2 L89.0,451.1 L87.5,451.1 L86.0,451.8 L84.5,452.0 L83.0,452.2 L81.5,450.9 L80.0,451.1 L78.5,452.1 L77.0,451.9 L75.5,451.0 L74.0,450.9 L72.5,451.7 L71.0,450.9 L69.5,451.8 L68.0,452.1 L66.5,451.8 L65.0,451.5 L63.5,451.3 L62.0,451.9 L60.5,451.0 L59.0,451.8 L57.5,451.9 L56.0,451.0 L54.5,451.9 L53.0,452.1 L51.5,452.1 L50.0,452.1 L48.5,452.1 L47.0,451.2 L45.5,451.7 L44.0,451.1 L42.5,451.2 L41.0,451.8 L39.5,451.5 L38.0,451.8 L36.5,452.0 L35.0,451.8 L33.5,452.1 L32.0,452.1 L30.5,451.5 L29.0,452.1 L27.5,451.9 L26.0,451.5 L24.5,451.1 L23.0,451.1 L21.5,452.1 L20.0,452.0 L18.5,451.5 L17.0,451.3 L15.5,452.1 L14.0,451.8 L12.5,452.1 L11.0,451.6 L9.5,451.1 L8.0,451.9 L6.5,451.8 L5.0,451.3 L3.5,451.8 L2.0,451.2Z" fill="#2022b8"/><path d="M2,447 L333,447 L360,511 L366,519.5 L372,523.5 L380,525 L677,525 L684,521.5 L690,515 L717.5,447.5 L1050,447.5" stroke="#2022b8" stroke-width="4.6" stroke-linejoin="round" fill="none"/><path d="M2.0,49.1 L3.5,48.4 L5.0,49.4 L6.5,49.5 L8.0,49.2 L9.5,49.3 L11.0,49.1 L12.5,49.0 L14.0,49.5 L15.5,48.8 L17.0,49.5 L18.5,49.4 L20.0,49.5 L21.5,49.5 L23.0,49.0 L24.5,49.5 L26.0,49.0 L27.5,49.4 L29.0,49.5 L30.5,48.9 L32.0,49.0 L33.5,49.6 L35.0,49.6 L36.5,49.3 L38.0,48.9 L39.5,49.0 L41.0,48.8 L42.5,49.3 L44.0,49.0 L45.5,48.9 L47.0,49.0 L48.5,49.5 L50.0,49.1 L51.5,49.1 L52.8,49.1 L53.0,49.4 L54.5,50.0 L56.0,51.0 L57.5,51.0 L59.0,51.5 L60.5,52.6 L62.0,52.3 L63.5,53.4 L65.0,54.2 L66.5,54.7 L68.0,55.0 L69.5,55.7 L71.0,55.6 L72.5,56.6 L74.0,56.9 L75.5,57.4 L77.0,58.1 L78.5,58.9 L80.0,59.5 L81.5,59.3 L83.0,60.6 L84.5,60.6 L86.0,61.5 L87.5,61.8 L89.0,62.4 L90.5,63.3 L92.0,63.6 L93.5,63.8 L95.0,64.4 L96.5,65.5 L98.0,65.7 L99.5,65.3 L101.0,66.3 L102.5,66.9 L104.0,68.1 L105.5,68.1 L106.9,68.8 L107.0,69.1 L108.5,69.6 L110.0,69.8 L111.5,70.4 L113.0,71.1 L114.5,71.6 L116.0,71.7 L117.5,72.6 L119.0,73.2 L120.5,73.1 L122.0,74.1 L123.5,74.8 L125.0,75.2 L126.5,75.5 L128.0,75.9 L129.5,76.7 L131.0,77.7 L132.5,77.9 L134.0,78.7 L135.5,79.1 L137.0,79.8 L138.5,80.0 L140.0,80.4 L141.5,80.6 L143.0,81.3 L144.5,82.1 L146.0,82.8 L147.5,83.2 L149.0,83.7 L150.5,84.0 L152.0,84.4 L153.5,85.3 L155.0,86.0 L156.5,86.0 L158.0,87.0 L159.5,87.2 L161.0,87.6 L162.5,88.6 L164.0,88.8 L165.5,89.6 L167.0,89.8 L168.5,90.1 L170.0,91.3 L171.5,91.6 L173.0,92.3 L174.5,93.0 L176.0,93.0 L177.5,93.6 L179.0,94.2 L180.5,94.9 L182.0,95.6 L183.5,95.7 L185.0,96.2 L186.5,97.2 L188.0,97.7 L189.5,98.1 L191.0,98.3 L192.5,99.0 L194.0,99.3 L195.5,99.9 L197.0,100.0 L198.5,100.7 L200.0,101.4 L201.5,101.8 L203.0,102.8 L204.5,103.4 L206.0,103.6 L207.5,104.0 L209.0,105.2 L210.5,105.6 L211.8,106.1 L212.0,106.2 L213.5,106.4 L215.0,106.6 L216.5,107.8 L218.0,107.7 L219.5,108.3 L221.0,108.8 L222.5,109.6 L224.0,110.1 L225.5,110.5 L227.0,111.2 L228.5,111.9 L230.0,112.1 L231.5,112.8 L233.0,113.7 L234.5,114.2 L236.0,114.4 L237.5,115.1 L239.0,115.5 L240.5,115.9 L242.0,116.4 L243.5,117.1 L245.0,117.7 L246.5,118.0 L248.0,118.7 L249.5,119.3 L251.0,119.6 L252.5,119.9 L254.0,120.7 L255.5,121.0 L257.0,122.1 L258.5,122.3 L260.0,123.3 L261.5,123.8 L263.0,123.8 L264.5,124.6 L266.0,125.0 L267.5,125.9 L269.0,126.0 L270.5,126.6 L272.0,127.0 L273.5,127.1 L275.0,128.4 L276.5,128.4 L278.0,128.9 L279.5,130.0 L281.0,130.4 L282.5,131.0 L284.0,131.3 L285.5,131.7 L287.0,132.6 L288.5,133.2 L290.0,133.8 L291.5,134.0 L293.0,134.5 L294.5,134.9 L296.0,135.7 L297.5,136.3 L299.0,136.6 L300.5,137.4 L302.0,137.6 L303.5,138.5 L305.0,138.9 L306.5,139.1 L308.0,139.9 L309.5,140.4 L311.0,141.4 L312.5,141.4 L314.0,142.1 L315.5,142.7 L316.7,142.7 L317.0,143.0 L318.5,143.7 L320.0,144.1 L321.5,144.8 L323.0,145.5 L324.5,145.8 L326.0,146.1 L327.5,147.0 L329.0,147.5 L330.5,148.1 L332.0,148.8 L333.5,148.9 L335.0,149.3 L336.5,150.0 L338.0,150.3 L339.5,151.0 L341.0,151.5 L342.5,152.1 L344.0,152.5 L345.5,153.0 L347.0,152.9 L348.5,154.1 L350.0,155.2 L351.5,155.4 L353.0,155.8 L354.5,156.4 L356.0,157.2 L357.5,157.6 L359.0,158.1 L360.5,158.7 L362.0,158.9 L363.5,159.8 L365.0,159.9 L366.5,160.0 L368.0,160.9 L369.5,162.0 L371.0,161.8 L372.5,162.6 L374.0,163.1 L375.5,163.5 L377.0,164.1 L378.5,164.8 L380.0,165.4 L381.5,165.9 L383.0,166.1 L384.5,167.1 L386.0,167.6 L387.5,168.1 L389.0,168.2 L390.5,169.2 L392.0,169.8 L393.5,169.8 L395.0,170.9 L396.5,170.9 L398.0,171.8 L399.5,172.5 L401.0,172.7 L402.5,173.2 L404.0,174.0 L405.5,174.0 L407.0,174.5 L408.5,175.2 L410.0,175.7 L411.5,176.4 L413.0,177.3 L414.5,177.7 L416.0,177.7 L417.5,178.1 L419.0,179.3 L420.5,179.9 L421.6,179.9 L422.0,180.4 L423.5,180.9 L425.0,181.2 L426.5,181.9 L428.0,182.3 L429.5,183.0 L431.0,183.2 L432.5,183.6 L434.0,184.0 L435.5,184.5 L437.0,185.7 L438.5,185.5 L440.0,186.0 L441.5,187.2 L443.0,187.1 L444.5,188.1 L446.0,188.8 L447.5,189.2 L449.0,189.2 L450.5,189.7 L452.0,190.4 L453.5,190.5 L455.0,192.0 L456.5,192.5 L458.0,192.3 L459.5,193.5 L461.0,193.5 L462.5,194.7 L464.0,194.7 L465.5,195.3 L467.0,195.5 L468.5,196.7 L470.0,196.6 L471.5,197.5 L473.0,197.7 L474.5,198.2 L476.0,199.0 L477.5,199.5 L479.0,200.2 L480.5,200.4 L482.0,201.1 L483.5,201.6 L485.0,202.6 L486.5,203.0 L488.0,203.5 L489.5,203.7 L491.0,204.4 L492.5,204.7 L494.0,205.2 L495.5,206.0 L497.0,206.8 L498.5,206.6 L500.0,207.4 L501.5,208.0 L503.0,208.6 L504.5,209.3 L506.0,210.0 L507.5,210.2 L509.0,210.4 L510.5,211.2 L512.0,211.5 L513.5,212.4 L515.0,212.8 L516.5,213.0 L518.0,214.2 L519.5,214.7 L521.0,215.2 L522.5,215.4 L524.0,216.1 L525.0,216.1 L525.5,216.2 L527.0,215.7 L528.5,215.4 L530.0,214.5 L531.5,213.9 L533.0,213.3 L534.5,212.7 L536.0,212.2 L537.5,211.8 L539.0,211.1 L540.5,210.8 L542.0,210.1 L543.5,209.7 L545.0,209.0 L546.5,209.0 L548.0,208.6 L549.5,207.8 L551.0,207.0 L552.5,207.0 L554.0,206.4 L555.5,205.4 L557.0,204.7 L558.5,204.1 L560.0,204.1 L561.5,203.8 L563.0,202.9 L564.5,202.5 L566.0,201.7 L567.5,201.7 L569.0,200.6 L570.5,200.7 L572.0,200.1 L573.5,198.9 L575.0,198.8 L576.5,198.4 L578.0,197.9 L579.5,197.1 L581.0,196.6 L582.5,196.0 L584.0,195.3 L585.5,195.4 L587.0,194.6 L588.5,194.1 L590.0,193.1 L591.5,193.0 L593.0,192.3 L594.5,192.0 L596.0,191.4 L597.5,190.7 L599.0,190.5 L600.5,189.6 L602.0,189.3 L603.5,188.9 L605.0,188.2 L606.5,187.5 L608.0,186.9 L609.5,187.0 L611.0,186.4 L612.5,185.5 L614.0,185.0 L615.5,184.4 L617.0,183.6 L618.5,183.6 L620.0,182.6 L621.5,182.3 L623.0,181.9 L624.5,181.3 L626.0,180.5 L627.5,180.2 L629.0,179.6 L630.5,178.9 L631.4,179.0 L632.0,178.8 L633.5,177.8 L635.0,177.7 L636.5,177.0 L638.0,176.8 L639.5,175.7 L641.0,175.5 L642.5,174.8 L644.0,174.8 L645.5,173.8 L647.0,173.4 L648.5,172.7 L650.0,172.2 L651.5,171.5 L653.0,171.3 L654.5,170.6 L656.0,170.1 L657.5,170.0 L659.0,169.2 L660.5,169.0 L662.0,168.2 L663.5,167.9 L665.0,167.5 L666.5,166.6 L668.0,166.0 L669.5,165.7 L671.0,165.3 L672.5,164.7 L674.0,163.8 L675.5,163.2 L677.0,163.0 L678.5,162.5 L680.0,162.1 L681.5,161.2 L683.0,160.6 L684.5,160.2 L686.0,160.2 L687.5,159.2 L689.0,159.1 L690.5,157.9 L692.0,157.8 L693.5,157.2 L695.0,156.7 L696.5,155.8 L698.0,155.9 L699.5,155.3 L701.0,154.4 L702.5,154.3 L704.0,153.8 L705.5,152.6 L707.0,152.2 L708.5,152.3 L710.0,151.3 L711.5,150.5 L713.0,150.0 L714.5,149.4 L716.0,149.3 L717.5,148.5 L719.0,148.5 L720.5,147.9 L722.0,147.3 L723.5,146.4 L725.0,146.4 L726.5,145.4 L728.0,144.7 L729.5,144.7 L731.0,143.9 L732.5,143.5 L734.0,143.3 L735.5,142.2 L736.3,141.9 L737.0,141.6 L738.5,141.3 L740.0,141.0 L741.5,140.2 L743.0,140.0 L744.5,139.5 L746.0,138.8 L747.5,138.7 L749.0,138.2 L750.5,136.9 L752.0,136.9 L753.5,136.3 L755.0,135.5 L756.5,135.2 L758.0,134.4 L759.5,134.1 L761.0,133.3 L762.5,133.4 L764.0,132.6 L765.5,131.3 L767.0,131.8 L768.5,131.3 L770.0,130.5 L771.5,129.9 L773.0,129.8 L774.5,129.2 L776.0,128.1 L777.5,127.8 L779.0,127.4 L780.5,126.7 L782.0,126.1 L783.5,125.6 L785.0,125.6 L786.5,125.2 L788.0,124.7 L789.5,123.7 L791.0,123.6 L792.5,122.9 L794.0,122.4 L795.5,121.8 L797.0,121.0 L798.5,121.1 L800.0,120.2 L801.5,119.9 L803.0,119.5 L804.5,118.4 L806.0,118.2 L807.5,117.5 L809.0,117.2 L810.5,116.4 L812.0,115.8 L813.5,115.8 L815.0,115.4 L816.5,114.3 L818.0,114.3 L819.5,113.7 L821.0,112.6 L822.5,112.2 L824.0,112.3 L825.5,111.6 L827.0,111.2 L828.5,110.4 L830.0,110.0 L831.5,109.3 L833.0,108.7 L834.5,108.2 L836.0,107.7 L837.5,107.2 L839.0,106.8 L840.5,106.2 L841.2,105.9 L842.0,105.4 L843.5,104.9 L845.0,104.9 L846.5,103.9 L848.0,103.2 L849.5,102.8 L851.0,102.7 L852.5,102.2 L854.0,101.7 L855.5,101.1 L857.0,100.6 L858.5,99.7 L860.0,99.6 L861.5,98.8 L863.0,98.3 L864.5,97.8 L866.0,97.2 L867.5,96.4 L869.0,95.9 L870.5,95.3 L872.0,94.1 L873.5,94.6 L875.0,94.0 L876.5,93.0 L878.0,92.4 L879.5,92.3 L881.0,91.8 L882.5,91.3 L884.0,90.5 L885.5,90.1 L887.0,89.2 L888.5,88.7 L890.0,88.8 L891.5,87.5 L893.0,87.0 L894.5,86.5 L896.0,86.4 L897.5,85.9 L899.0,85.3 L900.5,84.7 L902.0,83.7 L903.5,83.9 L905.0,83.0 L906.5,82.1 L908.0,81.6 L909.5,81.5 L911.0,81.1 L912.5,79.9 L914.0,79.6 L915.5,79.2 L917.0,78.8 L918.5,77.8 L920.0,77.5 L921.5,76.9 L923.0,76.6 L924.5,75.9 L926.0,75.6 L927.5,74.5 L929.0,74.4 L930.5,73.8 L932.0,73.5 L933.5,72.9 L935.0,72.1 L936.5,71.7 L938.0,70.9 L939.5,70.5 L941.0,70.1 L942.5,68.5 L944.0,68.6 L945.5,68.5 L946.1,67.8 L947.0,68.1 L948.5,67.2 L950.0,67.0 L951.5,66.3 L953.0,65.9 L954.5,65.1 L956.0,64.6 L957.5,63.8 L959.0,63.6 L960.5,62.6 L962.0,62.3 L963.5,61.7 L965.0,61.4 L966.5,60.5 L968.0,60.5 L969.5,59.7 L971.0,59.0 L972.5,58.4 L974.0,58.4 L975.5,57.5 L977.0,57.3 L978.5,56.0 L980.0,56.0 L981.5,55.1 L983.0,54.9 L984.5,54.2 L986.0,54.0 L987.5,52.9 L989.0,52.6 L990.5,51.0 L992.0,51.8 L993.5,50.7 L995.0,50.2 L996.5,49.7 L997.0,49.9 L998.0,49.5 L999.5,49.6 L1001.0,49.0 L1002.5,49.4 L1004.0,49.4 L1005.5,48.9 L1007.0,49.2 L1008.5,49.0 L1010.0,49.4 L1011.5,49.5 L1013.0,49.0 L1014.5,49.3 L1016.0,49.3 L1017.5,49.5 L1019.0,49.2 L1020.5,49.0 L1022.0,49.1 L1023.5,49.0 L1025.0,49.3 L1026.5,49.3 L1028.0,49.3 L1029.5,49.4 L1031.0,49.1 L1032.5,49.0 L1034.0,48.9 L1035.5,49.3 L1037.0,49.6 L1038.5,49.1 L1040.0,49.5 L1041.5,49.5 L1043.0,49.1 L1044.5,49.2 L1046.0,49.3 L1047.5,49.5 L1049.0,49.0 L1050.0,49.3 L1050.0,54.6 L1049.0,55.1 L1047.5,54.5 L1046.0,54.8 L1044.5,55.1 L1043.0,54.8 L1041.5,54.9 L1040.0,54.9 L1038.5,54.6 L1037.0,54.8 L1035.5,54.9 L1034.0,54.3 L1032.5,54.9 L1031.0,54.6 L1029.5,54.4 L1028.0,54.8 L1026.5,55.4 L1025.0,54.8 L1023.5,54.9 L1022.0,54.5 L1020.5,54.9 L1019.0,54.5 L1017.5,54.6 L1016.0,54.7 L1014.5,54.9 L1013.0,55.1 L1011.5,54.5 L1010.0,54.9 L1008.5,54.9 L1007.0,55.0 L1005.5,55.0 L1004.0,55.1 L1002.5,54.7 L1001.0,54.9 L999.5,54.8 L998.0,54.7 L997.0,54.7 L996.5,54.5 L995.0,54.8 L993.5,56.0 L992.0,56.3 L990.5,57.1 L989.0,57.3 L987.5,57.5 L986.0,58.2 L984.5,59.3 L983.0,59.7 L981.5,60.0 L980.0,60.3 L978.5,61.3 L977.0,61.4 L975.5,62.3 L974.0,62.8 L972.5,63.1 L971.0,63.6 L969.5,64.3 L968.0,64.9 L966.5,65.6 L965.0,66.1 L963.5,66.7 L962.0,67.2 L960.5,67.8 L959.0,68.4 L957.5,69.0 L956.0,69.6 L954.5,70.2 L953.0,70.6 L951.5,70.7 L950.0,71.9 L948.5,72.4 L947.0,72.3 L946.1,72.9 L945.5,73.4 L944.0,73.4 L942.5,74.1 L941.0,74.6 L939.5,75.2 L938.0,76.1 L936.5,76.6 L935.0,76.7 L933.5,77.2 L932.0,77.9 L930.5,78.6 L929.0,79.2 L927.5,79.7 L926.0,80.1 L924.5,80.5 L923.0,81.1 L921.5,81.8 L920.0,82.6 L918.5,83.0 L917.0,83.6 L915.5,84.1 L914.0,85.4 L912.5,85.0 L911.0,85.6 L909.5,86.4 L908.0,86.6 L906.5,87.5 L905.0,87.6 L903.5,88.3 L902.0,88.5 L900.5,89.0 L899.0,89.7 L897.5,90.3 L896.0,90.7 L894.5,91.8 L893.0,92.1 L891.5,93.0 L890.0,92.9 L888.5,93.8 L887.0,94.1 L885.5,94.6 L884.0,95.7 L882.5,95.8 L881.0,96.7 L879.5,97.4 L878.0,97.7 L876.5,97.7 L875.0,99.0 L873.5,99.1 L872.0,100.6 L870.5,99.8 L869.0,100.7 L867.5,101.2 L866.0,101.6 L864.5,102.7 L863.0,103.1 L861.5,103.4 L860.0,104.1 L858.5,104.9 L857.0,105.2 L855.5,106.0 L854.0,106.2 L852.5,107.0 L851.0,106.9 L849.5,108.2 L848.0,108.2 L846.5,109.2 L845.0,109.4 L843.5,110.0 L842.0,110.9 L841.2,111.0 L840.5,111.1 L839.0,111.3 L837.5,111.7 L836.0,112.4 L834.5,112.9 L833.0,114.0 L831.5,114.0 L830.0,114.3 L828.5,114.9 L827.0,115.9 L825.5,116.0 L824.0,116.8 L822.5,117.1 L821.0,117.5 L819.5,118.6 L818.0,118.6 L816.5,119.3 L815.0,120.2 L813.5,120.4 L812.0,120.6 L810.5,121.3 L809.0,121.7 L807.5,122.3 L806.0,122.7 L804.5,123.7 L803.0,124.2 L801.5,124.6 L800.0,124.9 L798.5,125.2 L797.0,126.4 L795.5,126.9 L794.0,127.1 L792.5,127.4 L791.0,127.7 L789.5,128.4 L788.0,129.2 L786.5,129.5 L785.0,130.0 L783.5,131.1 L782.0,131.6 L780.5,131.9 L779.0,132.2 L777.5,132.6 L776.0,133.3 L774.5,134.0 L773.0,134.4 L771.5,134.7 L770.0,135.3 L768.5,135.5 L767.0,136.4 L765.5,137.3 L764.0,137.7 L762.5,138.1 L761.0,138.3 L759.5,138.7 L758.0,139.9 L756.5,140.1 L755.0,140.6 L753.5,141.2 L752.0,141.5 L750.5,142.4 L749.0,142.9 L747.5,142.8 L746.0,143.6 L744.5,143.8 L743.0,144.4 L741.5,145.3 L740.0,146.0 L738.5,146.1 L737.0,146.6 L736.3,146.8 L735.5,147.2 L734.0,147.8 L732.5,148.6 L731.0,148.7 L729.5,149.0 L728.0,150.1 L726.5,150.5 L725.0,150.6 L723.5,151.8 L722.0,152.0 L720.5,152.7 L719.0,152.9 L717.5,153.4 L716.0,154.1 L714.5,154.6 L713.0,155.4 L711.5,155.6 L710.0,156.2 L708.5,156.9 L707.0,157.3 L705.5,158.0 L704.0,158.5 L702.5,158.5 L701.0,159.5 L699.5,159.8 L698.0,160.1 L696.5,160.8 L695.0,161.6 L693.5,162.3 L692.0,162.7 L690.5,162.8 L689.0,163.9 L687.5,164.1 L686.0,164.8 L684.5,165.1 L683.0,165.4 L681.5,165.8 L680.0,166.8 L678.5,167.2 L677.0,168.0 L675.5,168.4 L674.0,168.4 L672.5,169.5 L671.0,169.5 L669.5,170.1 L668.0,171.3 L666.5,171.2 L665.0,171.8 L663.5,172.1 L662.0,172.9 L660.5,173.1 L659.0,174.4 L657.5,174.7 L656.0,174.7 L654.5,175.7 L653.0,175.8 L651.5,176.8 L650.0,177.1 L648.5,177.9 L647.0,178.1 L645.5,178.6 L644.0,179.6 L642.5,179.9 L641.0,180.7 L639.5,180.9 L638.0,181.7 L636.5,181.7 L635.0,182.7 L633.5,182.8 L632.0,183.8 L631.4,183.7 L630.5,183.8 L629.0,184.2 L627.5,184.7 L626.0,185.5 L624.5,185.8 L623.0,187.0 L621.5,187.0 L620.0,187.4 L618.5,188.1 L617.0,188.4 L615.5,189.4 L614.0,189.6 L612.5,190.2 L611.0,191.2 L609.5,191.3 L608.0,192.0 L606.5,192.4 L605.0,192.6 L603.5,193.7 L602.0,193.7 L600.5,194.7 L599.0,194.8 L597.5,195.5 L596.0,196.4 L594.5,196.8 L593.0,197.5 L591.5,197.6 L590.0,198.3 L588.5,198.4 L587.0,199.4 L585.5,199.9 L584.0,200.0 L582.5,200.8 L581.0,201.2 L579.5,201.6 L578.0,202.4 L576.5,202.9 L575.0,203.5 L573.5,204.3 L572.0,204.2 L570.5,205.0 L569.0,205.6 L567.5,206.5 L566.0,207.0 L564.5,207.4 L563.0,207.7 L561.5,208.6 L560.0,208.8 L558.5,209.5 L557.0,210.2 L555.5,210.7 L554.0,211.0 L552.5,211.2 L551.0,211.6 L549.5,212.7 L548.0,213.1 L546.5,213.3 L545.0,213.8 L543.5,214.8 L542.0,215.0 L540.5,216.0 L539.0,216.0 L537.5,217.0 L536.0,217.6 L534.5,217.9 L533.0,218.2 L531.5,218.7 L530.0,219.6 L528.5,220.0 L527.0,220.5 L525.5,221.3 L525.0,221.3 L524.0,220.6 L522.5,220.3 L521.0,220.1 L519.5,219.5 L518.0,218.3 L516.5,218.5 L515.0,217.8 L513.5,216.7 L512.0,216.7 L510.5,215.6 L509.0,215.4 L507.5,214.5 L506.0,214.4 L504.5,213.8 L503.0,213.6 L501.5,212.9 L500.0,212.1 L498.5,211.5 L497.0,211.4 L495.5,210.4 L494.0,210.1 L492.5,209.3 L491.0,209.4 L489.5,209.0 L488.0,208.4 L486.5,207.7 L485.0,206.7 L483.5,206.2 L482.0,206.4 L480.5,205.6 L479.0,204.8 L477.5,204.1 L476.0,203.5 L474.5,203.6 L473.0,203.0 L471.5,202.6 L470.0,201.6 L468.5,201.3 L467.0,200.8 L465.5,200.4 L464.0,199.9 L462.5,199.2 L461.0,198.9 L459.5,198.0 L458.0,197.7 L456.5,197.3 L455.0,196.1 L453.5,196.6 L452.0,195.5 L450.5,194.8 L449.0,194.4 L447.5,194.1 L446.0,193.5 L444.5,192.4 L443.0,192.2 L441.5,191.6 L440.0,191.3 L438.5,190.5 L437.0,189.9 L435.5,189.5 L434.0,189.0 L432.5,188.9 L431.0,188.3 L429.5,187.6 L428.0,186.6 L426.5,186.6 L425.0,185.6 L423.5,185.0 L422.0,184.9 L421.6,184.7 L420.5,184.0 L419.0,183.9 L417.5,182.9 L416.0,182.9 L414.5,182.5 L413.0,181.9 L411.5,181.2 L410.0,180.9 L408.5,180.1 L407.0,179.4 L405.5,179.0 L404.0,178.7 L402.5,178.2 L401.0,177.4 L399.5,177.3 L398.0,176.2 L396.5,176.1 L395.0,175.5 L393.5,174.7 L392.0,174.2 L390.5,173.8 L389.0,173.2 L387.5,173.1 L386.0,172.0 L384.5,171.8 L383.0,170.9 L381.5,170.5 L380.0,170.3 L378.5,169.5 L377.0,169.4 L375.5,168.4 L374.0,168.0 L372.5,167.5 L371.0,167.3 L369.5,166.1 L368.0,165.6 L366.5,165.1 L365.0,164.6 L363.5,164.0 L362.0,163.7 L360.5,163.1 L359.0,162.8 L357.5,161.8 L356.0,162.0 L354.5,161.2 L353.0,160.2 L351.5,160.4 L350.0,160.0 L348.5,159.1 L347.0,158.9 L345.5,157.9 L344.0,157.4 L342.5,156.8 L341.0,156.9 L339.5,155.6 L338.0,155.5 L336.5,154.6 L335.0,154.6 L333.5,153.9 L332.0,153.7 L330.5,152.7 L329.0,152.2 L327.5,151.9 L326.0,151.1 L324.5,150.8 L323.0,149.7 L321.5,149.7 L320.0,149.0 L318.5,148.7 L317.0,147.9 L316.7,148.2 L315.5,147.9 L314.0,146.8 L312.5,146.2 L311.0,146.2 L309.5,145.5 L308.0,145.2 L306.5,143.9 L305.0,143.4 L303.5,143.1 L302.0,143.0 L300.5,142.3 L299.0,141.5 L297.5,141.1 L296.0,140.8 L294.5,140.2 L293.0,139.5 L291.5,139.7 L290.0,138.8 L288.5,137.5 L287.0,136.9 L285.5,137.2 L284.0,136.4 L282.5,136.0 L281.0,135.5 L279.5,134.9 L278.0,134.1 L276.5,133.5 L275.0,132.9 L273.5,133.6 L272.0,131.9 L270.5,131.1 L269.0,131.1 L267.5,130.1 L266.0,130.2 L264.5,129.5 L263.0,129.2 L261.5,128.2 L260.0,127.4 L258.5,127.5 L257.0,126.6 L255.5,125.8 L254.0,125.5 L252.5,124.9 L251.0,124.2 L249.5,123.8 L248.0,123.4 L246.5,122.5 L245.0,122.7 L243.5,122.1 L242.0,121.0 L240.5,120.8 L239.0,120.1 L237.5,119.9 L236.0,118.8 L234.5,119.1 L233.0,118.0 L231.5,117.8 L230.0,116.8 L228.5,116.4 L227.0,116.0 L225.5,115.8 L224.0,115.1 L222.5,114.6 L221.0,113.5 L219.5,113.3 L218.0,113.0 L216.5,112.5 L215.0,111.9 L213.5,111.5 L212.0,110.8 L211.8,111.6 L210.5,110.2 L209.0,109.7 L207.5,108.7 L206.0,108.7 L204.5,107.7 L203.0,107.5 L201.5,106.9 L200.0,106.7 L198.5,106.1 L197.0,106.1 L195.5,104.6 L194.0,104.6 L192.5,103.7 L191.0,103.5 L189.5,103.0 L188.0,102.3 L186.5,101.9 L185.0,101.2 L183.5,101.0 L182.0,100.4 L180.5,99.2 L179.0,99.4 L177.5,98.9 L176.0,97.9 L174.5,97.4 L173.0,97.0 L171.5,96.6 L170.0,96.0 L168.5,95.1 L167.0,94.8 L165.5,93.9 L164.0,93.8 L162.5,92.9 L161.0,92.3 L159.5,92.5 L158.0,91.9 L156.5,90.7 L155.0,90.8 L153.5,90.4 L152.0,89.1 L150.5,89.0 L149.0,88.4 L147.5,88.3 L146.0,87.0 L144.5,87.1 L143.0,86.6 L141.5,85.7 L140.0,85.6 L138.5,84.7 L137.0,84.4 L135.5,83.8 L134.0,83.2 L132.5,82.3 L131.0,81.8 L129.5,81.3 L128.0,81.1 L126.5,80.5 L125.0,80.0 L123.5,79.8 L122.0,79.3 L120.5,78.5 L119.0,78.1 L117.5,77.1 L116.0,77.1 L114.5,76.6 L113.0,75.5 L111.5,74.9 L110.0,74.6 L108.5,74.4 L107.0,73.7 L106.9,73.7 L105.5,72.8 L104.0,72.8 L102.5,72.0 L101.0,71.6 L99.5,70.7 L98.0,70.6 L96.5,69.6 L95.0,69.1 L93.5,69.0 L92.0,68.3 L90.5,67.7 L89.0,67.1 L87.5,66.5 L86.0,66.5 L84.5,65.3 L83.0,65.1 L81.5,64.2 L80.0,64.0 L78.5,64.0 L77.0,63.0 L75.5,62.1 L74.0,61.5 L72.5,61.5 L71.0,60.8 L69.5,60.2 L68.0,59.5 L66.5,59.5 L65.0,58.7 L63.5,58.3 L62.0,58.0 L60.5,57.3 L59.0,56.6 L57.5,55.8 L56.0,55.6 L54.5,55.0 L53.0,54.1 L52.8,54.8 L51.5,54.5 L50.0,54.5 L48.5,55.0 L47.0,54.8 L45.5,54.3 L44.0,54.9 L42.5,54.4 L41.0,54.8 L39.5,54.6 L38.0,54.7 L36.5,54.6 L35.0,54.9 L33.5,54.7 L32.0,54.7 L30.5,54.6 L29.0,54.8 L27.5,54.9 L26.0,54.4 L24.5,55.2 L23.0,54.5 L21.5,54.8 L20.0,54.5 L18.5,55.0 L17.0,54.9 L15.5,54.3 L14.0,54.4 L12.5,54.8 L11.0,54.3 L9.5,55.0 L8.0,54.2 L6.5,55.0 L5.0,54.4 L3.5,55.3 L2.0,54.5Z" fill="#141414"/><path d="M2,51.9 L52.8,51.9 L106.9,71.2 L211.8,108.2 L316.7,145.5 L421.6,182.3 L525,218.7 L631.4,181.3 L736.3,144.6 L841.2,108.4 L946.1,70.6 L997,52 L1050,52" stroke="#141414" stroke-width="4.1" stroke-linejoin="round" fill="none"/><path d="M1.90,62.60 V30 M1.90,60.00 V111.78 M1.90,111.78 V163.56 M1.90,163.56 V215.34 M1.90,215.34 V267.12 M1.90,267.12 V318.90 M1.90,318.90 V370.68 M1.90,370.68 V422.46 M1.90,422.46 V474.24 M1.90,474.24 V526.02 M1.90,526.02 V538 M106.80,62.60 V30 M106.80,60.00 V111.78 M106.80,111.78 V163.56 M106.80,163.56 V215.34 M106.80,215.34 V267.12 M106.80,267.12 V318.90 M106.80,318.90 V370.68 M106.80,370.68 V422.46 M106.80,422.46 V474.24 M106.80,474.24 V526.02 M106.80,526.02 V538 M211.70,62.60 V30 M211.70,60.00 V111.78 M211.70,111.78 V163.56 M211.70,163.56 V215.34 M211.70,215.34 V267.12 M211.70,267.12 V318.90 M211.70,318.90 V370.68 M211.70,370.68 V422.46 M211.70,422.46 V474.24 M211.70,474.24 V526.02 M211.70,526.02 V538 M316.60,62.60 V30 M316.60,60.00 V111.78 M316.60,111.78 V163.56 M316.60,163.56 V215.34 M316.60,215.34 V267.12 M316.60,267.12 V318.90 M316.60,318.90 V370.68 M316.60,370.68 V422.46 M316.60,422.46 V474.24 M316.60,474.24 V526.02 M316.60,526.02 V538 M421.50,62.60 V30 M421.50,60.00 V111.78 M421.50,111.78 V163.56 M421.50,163.56 V215.34 M421.50,215.34 V267.12 M421.50,267.12 V318.90 M421.50,318.90 V370.68 M421.50,370.68 V422.46 M421.50,422.46 V474.24 M421.50,474.24 V526.02 M421.50,526.02 V538 M526.40,62.60 V30 M526.40,60.00 V111.78 M526.40,111.78 V163.56 M526.40,163.56 V215.34 M526.40,215.34 V267.12 M526.40,267.12 V318.90 M526.40,318.90 V370.68 M526.40,370.68 V422.46 M526.40,422.46 V474.24 M526.40,474.24 V526.02 M526.40,526.02 V538 M631.30,62.60 V30 M631.30,60.00 V111.78 M631.30,111.78 V163.56 M631.30,163.56 V215.34 M631.30,215.34 V267.12 M631.30,267.12 V318.90 M631.30,318.90 V370.68 M631.30,370.68 V422.46 M631.30,422.46 V474.24 M631.30,474.24 V526.02 M631.30,526.02 V538 M736.20,62.60 V30 M736.20,60.00 V111.78 M736.20,111.78 V163.56 M736.20,163.56 V215.34 M736.20,215.34 V267.12 M736.20,267.12 V318.90 M736.20,318.90 V370.68 M736.20,370.68 V422.46 M736.20,422.46 V474.24 M736.20,474.24 V526.02 M736.20,526.02 V538 M841.10,62.60 V30 M841.10,60.00 V111.78 M841.10,111.78 V163.56 M841.10,163.56 V215.34 M841.10,215.34 V267.12 M841.10,267.12 V318.90 M841.10,318.90 V370.68 M841.10,370.68 V422.46 M841.10,422.46 V474.24 M841.10,474.24 V526.02 M841.10,526.02 V538 M946.00,62.60 V30 M946.00,60.00 V111.78 M946.00,111.78 V163.56 M946.00,163.56 V215.34 M946.00,215.34 V267.12 M946.00,267.12 V318.90 M946.00,318.90 V370.68 M946.00,370.68 V422.46 M946.00,422.46 V474.24 M946.00,474.24 V526.02 M946.00,526.02 V538" stroke="#606060" stroke-width="1.25" stroke-dasharray="2.6 2.89" fill="none"/><path d="M105.50,61.30 H210.40 M210.40,61.30 H315.30 M315.30,61.30 H420.20 M420.20,61.30 H525.10 M525.10,61.30 H630.00 M630.00,61.30 H734.90 M734.90,61.30 H839.80 M839.80,61.30 H944.70 M944.70,61.30 H1030.5 M105.50,113.08 H210.40 M210.40,113.08 H315.30 M315.30,113.08 H420.20 M420.20,113.08 H525.10 M525.10,113.08 H630.00 M630.00,113.08 H734.90 M734.90,113.08 H839.80 M839.80,113.08 H944.70 M944.70,113.08 H1030.5 M105.50,164.86 H210.40 M210.40,164.86 H315.30 M315.30,164.86 H420.20 M420.20,164.86 H525.10 M525.10,164.86 H630.00 M630.00,164.86 H734.90 M734.90,164.86 H839.80 M839.80,164.86 H944.70 M944.70,164.86 H1030.5 M105.50,216.64 H210.40 M210.40,216.64 H315.30 M315.30,216.64 H420.20 M420.20,216.64 H525.10 M525.10,216.64 H630.00 M630.00,216.64 H734.90 M734.90,216.64 H839.80 M839.80,216.64 H944.70 M944.70,216.64 H1030.5 M105.50,268.42 H210.40 M210.40,268.42 H315.30 M315.30,268.42 H420.20 M420.20,268.42 H525.10 M525.10,268.42 H630.00 M630.00,268.42 H734.90 M734.90,268.42 H839.80 M839.80,268.42 H944.70 M944.70,268.42 H1030.5 M105.50,320.20 H210.40 M210.40,320.20 H315.30 M315.30,320.20 H420.20 M420.20,320.20 H525.10 M525.10,320.20 H630.00 M630.00,320.20 H734.90 M734.90,320.20 H839.80 M839.80,320.20 H944.70 M944.70,320.20 H1030.5 M105.50,371.98 H210.40 M210.40,371.98 H315.30 M315.30,371.98 H420.20 M420.20,371.98 H525.10 M525.10,371.98 H630.00 M630.00,371.98 H734.90 M734.90,371.98 H839.80 M839.80,371.98 H944.70 M944.70,371.98 H1030.5 M105.50,423.76 H210.40 M210.40,423.76 H315.30 M315.30,423.76 H420.20 M420.20,423.76 H525.10 M525.10,423.76 H630.00 M630.00,423.76 H734.90 M734.90,423.76 H839.80 M839.80,423.76 H944.70 M944.70,423.76 H1030.5 M105.50,475.54 H210.40 M210.40,475.54 H315.30 M315.30,475.54 H420.20 M420.20,475.54 H525.10 M525.10,475.54 H630.00 M630.00,475.54 H734.90 M734.90,475.54 H839.80 M839.80,475.54 H944.70 M944.70,475.54 H1030.5 M105.50,527.32 H210.40 M210.40,527.32 H315.30 M315.30,527.32 H420.20 M420.20,527.32 H525.10 M525.10,527.32 H630.00 M630.00,527.32 H734.90 M734.90,527.32 H839.80 M839.80,527.32 H944.70 M944.70,527.32 H1030.5" stroke="#606060" stroke-width="1.25" stroke-dasharray="2.6 2.89" fill="none"/><path d="M2,61.30 H105.50 M2,113.08 H105.50 M2,164.86 H105.50 M2,216.64 H105.50 M2,268.42 H105.50 M2,320.20 H105.50 M2,371.98 H105.50 M2,423.76 H105.50 M2,475.54 H105.50 M2,527.32 H105.50" stroke="#606060" stroke-width="1.25" stroke-dasharray="2.6 2.89" stroke-dashoffset="2.6" fill="none"/><text x="1047.8" y="64.2" font-size="8.2" fill="#111111" font-weight="bold" text-anchor="end" textLength="14.84" lengthAdjust="spacingAndGlyphs" >15 V</text><text x="1047.8" y="116.0" font-size="8.2" fill="#111111" font-weight="bold" text-anchor="end" textLength="14.84" lengthAdjust="spacingAndGlyphs" >10 V</text><text x="1047.8" y="167.8" font-size="8.2" fill="#111111" font-weight="bold" text-anchor="end" textLength="10.83" lengthAdjust="spacingAndGlyphs" >5 V</text><text x="1047.8" y="219.5" font-size="8.2" fill="#111111" font-weight="bold" text-anchor="end" textLength="10.83" lengthAdjust="spacingAndGlyphs" >0 V</text><text x="1047.8" y="271.3" font-size="8.2" fill="#111111" font-weight="bold" text-anchor="end" textLength="13.23" lengthAdjust="spacingAndGlyphs" >-5 V</text><text x="1047.8" y="323.1" font-size="8.2" fill="#111111" font-weight="bold" text-anchor="end" textLength="17.25" lengthAdjust="spacingAndGlyphs" >-10 V</text><text x="1047.8" y="374.9" font-size="8.2" fill="#111111" font-weight="bold" text-anchor="end" textLength="17.25" lengthAdjust="spacingAndGlyphs" >-15 V</text><text x="1047.8" y="426.7" font-size="8.2" fill="#111111" font-weight="bold" text-anchor="end" textLength="17.25" lengthAdjust="spacingAndGlyphs" >-20 V</text><text x="1047.8" y="478.4" font-size="8.2" fill="#111111" font-weight="bold" text-anchor="end" textLength="17.25" lengthAdjust="spacingAndGlyphs" >-25 V</text><text x="1047.8" y="530.2" font-size="8.2" fill="#111111" font-weight="bold" text-anchor="end" textLength="17.25" lengthAdjust="spacingAndGlyphs" >-30 V</text><text x="106.8" y="545.6" font-size="8.2" fill="#111111" font-weight="bold" text-anchor="middle" textLength="22.72" lengthAdjust="spacingAndGlyphs" >-1.6 ks</text><text x="211.7" y="545.6" font-size="8.2" fill="#111111" font-weight="bold" text-anchor="middle" textLength="22.72" lengthAdjust="spacingAndGlyphs" >-1.2 ks</text><text x="316.6" y="545.6" font-size="8.2" fill="#111111" font-weight="bold" text-anchor="middle" textLength="20.69" lengthAdjust="spacingAndGlyphs" >-800 s</text><text x="421.5" y="545.6" font-size="8.2" fill="#111111" font-weight="bold" text-anchor="middle" textLength="20.69" lengthAdjust="spacingAndGlyphs" >-400 s</text><text x="526.4" y="545.6" font-size="8.2" fill="#111111" font-weight="bold" text-anchor="middle" textLength="10.15" lengthAdjust="spacingAndGlyphs" >0 s</text><text x="631.3" y="545.6" font-size="8.2" fill="#111111" font-weight="bold" text-anchor="middle" textLength="18.26" lengthAdjust="spacingAndGlyphs" >400 s</text><text x="736.2" y="545.6" font-size="8.2" fill="#111111" font-weight="bold" text-anchor="middle" textLength="18.26" lengthAdjust="spacingAndGlyphs" >800 s</text><text x="841.1" y="545.6" font-size="8.2" fill="#111111" font-weight="bold" text-anchor="middle" textLength="20.29" lengthAdjust="spacingAndGlyphs" >1.2 ks</text><text x="946.0" y="545.6" font-size="8.2" fill="#111111" font-weight="bold" text-anchor="middle" textLength="20.29" lengthAdjust="spacingAndGlyphs" >1.6 ks</text><path d="M5,209.5 H17 L23,216.5 L17,223.5 H5 Q4,223.5 4,222.5 V210.5 Q4,209.5 5,209.5 Z" fill="#f2e23a" stroke="#6a6a30" stroke-width="1"/><text x="7.9" y="219.3" font-size="7.6" fill="#222222" stroke="#222" stroke-width="0.15">C</text><text x="13.4" y="219.3" font-size="7.6" fill="#222222" stroke="#222" stroke-width="0.15">1</text><text x="29.5" y="219.8" font-size="11" fill="#e2e21c" textLength="35.8" lengthAdjust="spacingAndGlyphs" stroke="#60601a" stroke-width="0.7" paint-order="stroke" stroke-opacity="0.55">SUPPLY</text><path d="M5,261.3 H17 L23,268.3 L17,275.3 H5 Q4,275.3 4,274.3 V262.3 Q4,261.3 5,261.3 Z" fill="#e8f5f8" stroke="#62cad8" stroke-width="1"/><text x="7.9" y="271.1" font-size="7.6" fill="#222222" stroke="#222" stroke-width="0.15">C</text><text x="13.4" y="271.1" font-size="7.6" fill="#222222" stroke="#222" stroke-width="0.15">2</text><text x="29.5" y="271.6" font-size="11" fill="#18b0be" textLength="17.8" lengthAdjust="spacingAndGlyphs" stroke="#107880" stroke-width="0.7" paint-order="stroke" stroke-opacity="0.55">ERR</text><path d="M5,313.1 H17 L23,320.1 L17,327.1 H5 Q4,327.1 4,326.1 V314.1 Q4,313.1 5,313.1 Z" fill="#fbe9ec" stroke="#f0a0aa" stroke-width="1"/><text x="7.9" y="322.90000000000003" font-size="7.6" fill="#222222" stroke="#222" stroke-width="0.15">C</text><text x="13.4" y="322.90000000000003" font-size="7.6" fill="#222222" stroke="#222" stroke-width="0.15">3</text><text x="29.5" y="323.40000000000003" font-size="11" fill="#c8283c" textLength="33.5" lengthAdjust="spacingAndGlyphs" stroke="#801828" stroke-width="0.7" paint-order="stroke" stroke-opacity="0.55">VOUT0</text><path d="M5,416.7 H17 L23,423.7 L17,430.7 H5 Q4,430.7 4,429.7 V417.7 Q4,416.7 5,416.7 Z" fill="#eef5e4" stroke="#b0d488" stroke-width="1"/><text x="7.9" y="426.5" font-size="7.6" fill="#222222" stroke="#222" stroke-width="0.15">C</text><text x="13.4" y="426.5" font-size="7.6" fill="#222222" stroke="#222" stroke-width="0.15">4</text><text x="29.5" y="427.0" font-size="11" fill="#68b01c" textLength="27.5" lengthAdjust="spacingAndGlyphs" stroke="#406a10" stroke-width="0.7" paint-order="stroke" stroke-opacity="0.55">VLDO</text><path d="M5,520.3 H17 L23,527.3 L17,534.3 H5 Q4,534.3 4,533.3 V521.3 Q4,520.3 5,520.3 Z" fill="#e6e8f8" stroke="#7078d8" stroke-width="1"/><text x="7.9" y="530.0999999999999" font-size="7.6" fill="#222222" stroke="#222" stroke-width="0.15">C</text><text x="13.4" y="530.0999999999999" font-size="7.6" fill="#222222" stroke="#222" stroke-width="0.15">6</text><text x="29.5" y="530.5999999999999" font-size="11" fill="#1a1ea8" textLength="29" lengthAdjust="spacingAndGlyphs" stroke="#101060" stroke-width="0.7" paint-order="stroke" stroke-opacity="0.55">IOUT0</text><path d="M1038.6,91.9 L1044.9,86.7 V90.8 H1050.5 V93 H1044.9 V97.4 Z" fill="#000" stroke="#e8e840" stroke-width="0.5"/><path d="M1028,33.8 H1045.5 Q1047,33.8 1047,35.3 V52 Z" fill="#4b4b68" stroke="#333" stroke-width="1"/><circle cx="1042.8" cy="37.2" r="2.3" fill="none" stroke="#c0c0c0" stroke-width="1"/><line x1="1041.2" y1="38.8" x2="1038" y2="42.2" stroke="#c0c0c0" stroke-width="1.2"/><path d="M523,18.3 H529 Q530.3,18.3 530.3,19.6 V25.5 L526,29.2 L521.7,25.5 V19.6 Q521.7,18.3 523,18.3 Z" fill="#262626" stroke="#d86850" stroke-width="0.9" stroke-dasharray="1.4 0.6"/><rect x="523" y="16.6" width="6" height="1.7" fill="#e8d020"/><path d="M523.8,21 H528.2 V22.3 H526.7 V26 H525.3 V22.3 H523.8 Z" fill="#8a4a3a"/><path d="M520,29.8 H531.6 L525.9,35.6 Z" fill="#e87060"/><path d="M520.6,35.3 H531.4 V46.6 H527.6 L526,49.2 L524.4,46.6 H520.6 Z" fill="#000" stroke="#f07060" stroke-width="0.9"/><path d="M523.2,38.2 H528.8 V40.3 H526.9 V44.6 H525.1 V40.3 H523.2 Z" fill="#f07868"/><circle cx="521.2" cy="46.6" r="0.7" fill="#e8d030"/><circle cx="530.8" cy="46.6" r="0.7" fill="#e8d030"/><rect x="0" y="550" width="1061" height="47" fill="#2c2c2c"/><rect x="0" y="596" width="1061" height="1" fill="#474442"/><rect x="1060" y="550" width="1" height="47" fill="#444"/><rect x="2" y="552" width="49.7" height="43.6" rx="3" fill="#c9c9c9"/><path d="M2,562.6 V555 Q2,552 5,552 H48.7 Q51.7,552 51.7,555 V562.6 Z" fill="#f5e52e"/><rect x="2" y="562.4" width="49.7" height="0.9" fill="#5870a0"/><text x="4.7" y="559.9" font-size="9" fill="#1c1c1c" textLength="16.2" lengthAdjust="spacingAndGlyphs" >Ch 1</text><text x="6" y="572.4" font-size="9" fill="#1e1e1e" textLength="25.6" lengthAdjust="spacingAndGlyphs" stroke="#1e1e1e" stroke-width="0.25">5 V/div</text><text x="6" y="593.3" font-size="9" fill="#1e1e1e" textLength="21.7" lengthAdjust="spacingAndGlyphs" stroke="#1e1e1e" stroke-width="0.25">1 GHz</text><g transform="translate(6,576.2)" fill="none" stroke="#303030" stroke-width="1.15"><path d="M0.7,5.8 Q0.7,0.6 4.4,0.6 Q7.6,0.6 8.2,3.4"/><circle cx="7.3" cy="4.7" r="1.9"/><path d="M3.2,3.6 L5.4,2.4" stroke="#2a3aa0" stroke-width="1"/></g><rect x="54.5" y="552" width="49.7" height="43.6" rx="3" fill="#c9c9c9"/><path d="M54.5,562.6 V555 Q54.5,552 57.5,552 H101.2 Q104.2,552 104.2,555 V562.6 Z" fill="#1f3d40"/><rect x="54.5" y="562.4" width="49.7" height="0.9" fill="#5870a0"/><text x="57.2" y="559.9" font-size="9" fill="#22c4d4" textLength="17" lengthAdjust="spacingAndGlyphs" >Ch 2</text><text x="58.5" y="572.4" font-size="9" fill="#1e1e1e" textLength="30.8" lengthAdjust="spacingAndGlyphs" stroke="#1e1e1e" stroke-width="0.25">10 V/div</text><text x="58.5" y="593.3" font-size="9" fill="#1e1e1e" textLength="21.7" lengthAdjust="spacingAndGlyphs" stroke="#1e1e1e" stroke-width="0.25">1 GHz</text><path d="M55,562.2 V555 Q55,552.5 57.5,552.5 H101.7 Q103.7,552.5 103.7,555 V562.2" fill="none" stroke="#1a2a78" stroke-width="1"/><g transform="translate(58.5,576.2)" fill="none" stroke="#303030" stroke-width="1.15"><path d="M0.7,5.8 Q0.7,0.6 4.4,0.6 Q7.6,0.6 8.2,3.4"/><circle cx="7.3" cy="4.7" r="1.9"/><path d="M3.2,3.6 L5.4,2.4" stroke="#2a3aa0" stroke-width="1"/></g><rect x="107" y="552" width="49.7" height="43.6" rx="3" fill="#c9c9c9"/><path d="M107,562.6 V555 Q107,552 110,552 H153.7 Q156.7,552 156.7,555 V562.6 Z" fill="#3c2424"/><rect x="107" y="562.4" width="49.7" height="0.9" fill="#5870a0"/><text x="109.7" y="559.9" font-size="9" fill="#d83850" textLength="17" lengthAdjust="spacingAndGlyphs" >Ch 3</text><text x="111" y="572.4" font-size="9" fill="#1e1e1e" textLength="30.8" lengthAdjust="spacingAndGlyphs" stroke="#1e1e1e" stroke-width="0.25">10 V/div</text><text x="111" y="593.3" font-size="9" fill="#1e1e1e" textLength="21.7" lengthAdjust="spacingAndGlyphs" stroke="#1e1e1e" stroke-width="0.25">1 GHz</text><g transform="translate(111,576.2)" fill="none" stroke="#303030" stroke-width="1.15"><path d="M0.7,5.8 Q0.7,0.6 4.4,0.6 Q7.6,0.6 8.2,3.4"/><circle cx="7.3" cy="4.7" r="1.9"/><path d="M3.2,3.6 L5.4,2.4" stroke="#2a3aa0" stroke-width="1"/></g><rect x="159.3" y="552" width="49.7" height="43.6" rx="3" fill="#c9c9c9"/><path d="M159.3,562.6 V555 Q159.3,552 162.3,552 H206.0 Q209.0,552 209.0,555 V562.6 Z" fill="#2c3a1e"/><rect x="159.3" y="562.4" width="49.7" height="0.9" fill="#5870a0"/><text x="162.0" y="559.9" font-size="9" fill="#78c428" textLength="17" lengthAdjust="spacingAndGlyphs" >Ch 4</text><text x="163.3" y="572.4" font-size="9" fill="#1e1e1e" textLength="25.6" lengthAdjust="spacingAndGlyphs" stroke="#1e1e1e" stroke-width="0.25">5 V/div</text><text x="163.3" y="593.3" font-size="9" fill="#1e1e1e" textLength="21.7" lengthAdjust="spacingAndGlyphs" stroke="#1e1e1e" stroke-width="0.25">1 GHz</text><g transform="translate(163.3,576.2)" fill="none" stroke="#303030" stroke-width="1.15"><path d="M0.7,5.8 Q0.7,0.6 4.4,0.6 Q7.6,0.6 8.2,3.4"/><circle cx="7.3" cy="4.7" r="1.9"/><path d="M3.2,3.6 L5.4,2.4" stroke="#2a3aa0" stroke-width="1"/></g><rect x="211.5" y="552" width="49.7" height="43.6" rx="3" fill="#c9c9c9"/><path d="M211.5,562.6 V555 Q211.5,552 214.5,552 H258.2 Q261.2,552 261.2,555 V562.6 Z" fill="#1c2048"/><rect x="211.5" y="562.4" width="49.7" height="0.9" fill="#5870a0"/><text x="214.2" y="559.9" font-size="9" fill="#1a28c0" textLength="16.5" lengthAdjust="spacingAndGlyphs" >Ch 6</text><text x="215.5" y="572.4" font-size="9" fill="#1e1e1e" textLength="38.1" lengthAdjust="spacingAndGlyphs" stroke="#1e1e1e" stroke-width="0.25">50 mA/div</text><text x="215.5" y="583" font-size="9" fill="#1e1e1e" textLength="20.4" lengthAdjust="spacingAndGlyphs" stroke="#1e1e1e" stroke-width="0.25">1 MΩ</text><text x="215.5" y="593.3" font-size="9" fill="#1e1e1e" textLength="33" lengthAdjust="spacingAndGlyphs" stroke="#1e1e1e" stroke-width="0.25">120 MHz</text><path d="M252.5,587.5 h2 v2 h1 v1.5 h3" fill="none" stroke="#333" stroke-width="1.2"/><rect x="591.3" y="552" width="22" height="43" rx="3.5" fill="#2c2c2c" stroke="#5c5c68" stroke-width="1"/><rect x="591.8" y="552.5" width="21" height="4" fill="#363636"/><rect x="593.3" y="556" width="18" height="2" fill="#e86048"/><rect x="593.3" y="558" width="18" height="1" fill="#1c2038"/><text x="602.3" y="576.4" font-size="11.5" fill="#f0f0f0" text-anchor="middle" textLength="6" lengthAdjust="spacingAndGlyphs" >5</text><rect x="618" y="552" width="1" height="43.5" fill="#66688a"/><rect x="624.7" y="552" width="22" height="43" rx="3.5" fill="#2c2c2c" stroke="#5c5c68" stroke-width="1"/><rect x="625.2" y="552.5" width="21" height="4" fill="#363636"/><rect x="626.7" y="556" width="18" height="2" fill="#e86048"/><rect x="626.7" y="558" width="18" height="1" fill="#1c2038"/><text x="635.7" y="568.5" font-size="8.6" fill="#f0f0f0" text-anchor="middle" textLength="15.7" lengthAdjust="spacingAndGlyphs" >Add</text><text x="635.7" y="577.2" font-size="8.6" fill="#f0f0f0" text-anchor="middle" textLength="17" lengthAdjust="spacingAndGlyphs" >New</text><text x="635.7" y="585.8" font-size="8.6" fill="#f0f0f0" text-anchor="middle" textLength="19.7" lengthAdjust="spacingAndGlyphs" >Math</text><rect x="649.5" y="552" width="22" height="43" rx="3.5" fill="#2c2c2c" stroke="#5c5c68" stroke-width="1"/><rect x="650" y="552.5" width="21" height="4" fill="#363636"/><rect x="651.5" y="556" width="18" height="2" fill="#d8d8e0"/><rect x="651.5" y="558" width="18" height="1" fill="#1c2038"/><text x="660.5" y="568.5" font-size="8.6" fill="#f0f0f0" text-anchor="middle" textLength="15.7" lengthAdjust="spacingAndGlyphs" >Add</text><text x="660.5" y="577.2" font-size="8.6" fill="#f0f0f0" text-anchor="middle" textLength="17" lengthAdjust="spacingAndGlyphs" >New</text><text x="660.5" y="585.8" font-size="8.6" fill="#f0f0f0" text-anchor="middle" textLength="13" lengthAdjust="spacingAndGlyphs" >Ref</text><rect x="674.7" y="552" width="22" height="43" rx="3.5" fill="#2c2c2c" stroke="#5c5c68" stroke-width="1"/><rect x="675.2" y="552.5" width="21" height="4" fill="#363636"/><rect x="676.7" y="556" width="18" height="2" fill="#8c8ce8"/><rect x="676.7" y="558" width="18" height="1" fill="#1c2038"/><text x="685.7" y="568.5" font-size="8.6" fill="#f0f0f0" text-anchor="middle" textLength="15.7" lengthAdjust="spacingAndGlyphs" >Add</text><text x="685.7" y="577.2" font-size="8.6" fill="#f0f0f0" text-anchor="middle" textLength="17" lengthAdjust="spacingAndGlyphs" >New</text><text x="685.7" y="585.8" font-size="8.6" fill="#f0f0f0" text-anchor="middle" textLength="14" lengthAdjust="spacingAndGlyphs" >Bus</text><rect x="702" y="552" width="1" height="43.5" fill="#484848"/><rect x="708" y="552" width="110.3" height="42.9" rx="3" fill="#c9c9c9"/><path d="M708,561.6 V555 Q708,552 711,552 H815.3 Q818.3,552 818.3,555 V561.6 Z" fill="#55565a"/><rect x="708" y="560.8" width="110.3" height="1" fill="#4a6262"/><text x="711" y="559.1" font-size="9.5" fill="#e4e4e4" textLength="40.6" lengthAdjust="spacingAndGlyphs" >Horizontal</text><text x="711.9" y="571.8" font-size="9" fill="#1e1e1e" textLength="32.7" lengthAdjust="spacingAndGlyphs" stroke="#1e1e1e" stroke-width="0.25">400 s/div</text><text x="711.9" y="582.3" font-size="9" fill="#1e1e1e" textLength="46" lengthAdjust="spacingAndGlyphs" stroke="#1e1e1e" stroke-width="0.25">SR: 312.5 S/s</text><text x="711.9" y="592.6" font-size="9" fill="#1e1e1e" textLength="50.8" lengthAdjust="spacingAndGlyphs" stroke="#1e1e1e" stroke-width="0.25">RL: 1.25 Mpts</text><text x="770.2" y="571.8" font-size="9" fill="#1e1e1e" textLength="14.6" lengthAdjust="spacingAndGlyphs" stroke="#1e1e1e" stroke-width="0.25">4 ks</text><text x="770.2" y="582.3" font-size="9" fill="#1e1e1e" textLength="34.7" lengthAdjust="spacingAndGlyphs" stroke="#1e1e1e" stroke-width="0.25">3.2 ms/pt</text><text x="778.5" y="592.6" font-size="9" fill="#1e1e1e" textLength="16.1" lengthAdjust="spacingAndGlyphs" stroke="#1e1e1e" stroke-width="0.25">50%</text><path d="M770,586 H775.6 V591 L772.8,593 L770,591 Z" fill="#d02828"/><rect x="771.4" y="587.3" width="2.8" height="3.4" fill="#111"/><rect x="824" y="552" width="88.2" height="42.9" rx="3" fill="#c9c9c9"/><path d="M824,561.6 V555 Q824,552 827,552 H909.2 Q912.2,552 912.2,555 V561.6 Z" fill="#55565a"/><rect x="824" y="560.8" width="88.2" height="1" fill="#4a6262"/><text x="827" y="559.1" font-size="9.5" fill="#e4e4e4" textLength="26.8" lengthAdjust="spacingAndGlyphs" >Trigger</text><text x="864.9" y="571.7" font-size="9" fill="#1e1e1e" textLength="15.5" lengthAdjust="spacingAndGlyphs" stroke="#1e1e1e" stroke-width="0.25">12 V</text><rect x="828.4" y="565.4" width="15.4" height="8.6" rx="3" fill="#f2e230" stroke="#4a4a4a" stroke-width="1.1"/><rect x="829.5" y="572.5" width="13.2" height="1" fill="#d04848"/><text x="836" y="572.4" font-size="8" fill="#1a1a1a" font-weight="bold" text-anchor="middle" >1</text><path d="M850.5,573 Q853,573 854.5,570 Q856,566 859,566" fill="none" stroke="#3a5a9a" stroke-width="1"/><rect x="918" y="552" width="82.6" height="42.9" rx="3" fill="#c9c9c9"/><path d="M918,561.6 V555 Q918,552 921,552 H997.6 Q1000.6,552 1000.6,555 V561.6 Z" fill="#55565a"/><rect x="918" y="560.8" width="82.6" height="1" fill="#4a6262"/><text x="921" y="559.1" font-size="9.5" fill="#e4e4e4" textLength="42.5" lengthAdjust="spacingAndGlyphs" >Acquisition</text><text x="921.7" y="571.7" font-size="9" fill="#1e1e1e" textLength="22.1" lengthAdjust="spacingAndGlyphs" stroke="#1e1e1e" stroke-width="0.25">Auto,</text><text x="954.8" y="571.7" font-size="9" fill="#1e1e1e" textLength="30.3" lengthAdjust="spacingAndGlyphs" stroke="#1e1e1e" stroke-width="0.25">Analyze</text><text x="921.7" y="582.3" font-size="9" fill="#1e1e1e" textLength="58.8" lengthAdjust="spacingAndGlyphs" stroke="#1e1e1e" stroke-width="0.25">Sample: 12 bits</text><text x="921.7" y="592.5" font-size="9" fill="#1e1e1e" textLength="25.2" lengthAdjust="spacingAndGlyphs" stroke="#1e1e1e" stroke-width="0.25">1 Acqs</text><rect x="1006" y="551.3" width="50.2" height="20.8" rx="3.5" fill="#243434"/><rect x="1006.5" y="551.7" width="49.3" height="19.9" rx="3" fill="#c44050"/><rect x="1006.5" y="551.7" width="49.3" height="19" rx="3" fill="#7a2a2a"/><rect x="1006.5" y="551.7" width="49.3" height="18.1" rx="3" fill="#ff1c1e"/><rect x="1009" y="565" width="44.3" height="4.8" fill="#ff1c1e"/><text x="1030.6" y="563.5" font-size="8.5" fill="#ffe8e8" font-weight="bold" text-anchor="middle" textLength="28.4" lengthAdjust="spacingAndGlyphs" >Stopped</text></svg>
</body></html>
